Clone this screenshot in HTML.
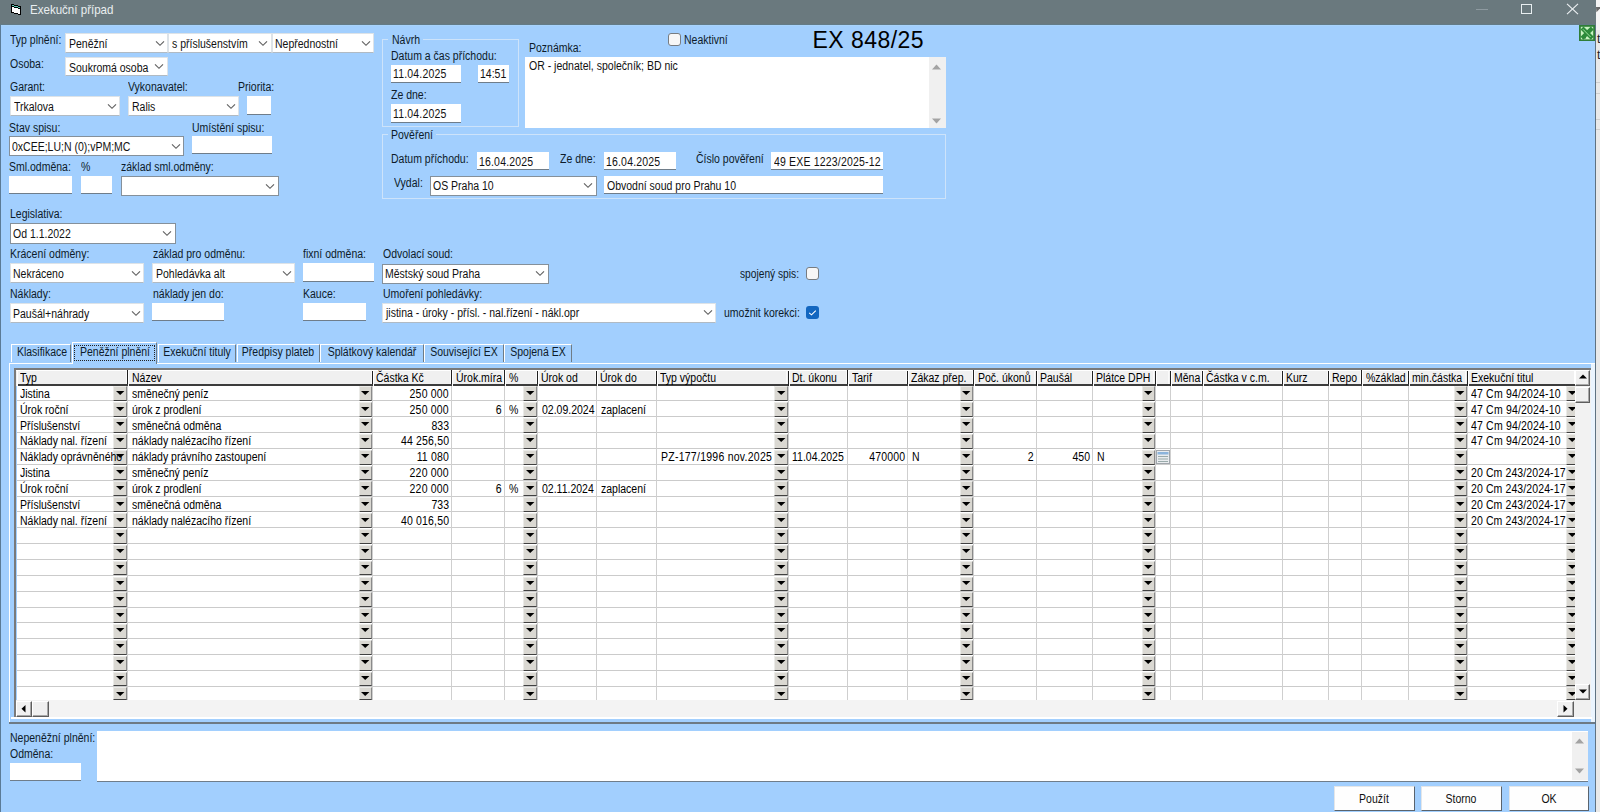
<!DOCTYPE html><html><head><meta charset="utf-8"><title>Exekuční případ</title><style>
html,body{margin:0;padding:0;width:1600px;height:812px;overflow:hidden;background:#a2cffe;}
.t{position:absolute;white-space:nowrap;font-family:"Liberation Sans",sans-serif;transform-origin:0 0;}
.b{position:absolute;}
</style></head><body>
<div class="b" style="left:0.00px;top:0.00px;width:1600.00px;height:812.00px;background:#a2cffe"></div>
<div class="b" style="left:1595.00px;top:0.00px;width:5.00px;height:812.00px;background:#e9e9e9"></div>
<div class="b" style="left:1596.00px;top:0.00px;width:4.00px;height:30.00px;background:#f4f4f4"></div>
<div class="b" style="left:1595.00px;top:25.00px;width:1.00px;height:787.00px;background:#5f7282"></div>
<svg class="b" style="left:1596px;top:0px" width="4" height="14"><polygon points="0,7 4,7 4,8.5 0.4,12.3" fill="#6a6a6a"/></svg>
<div class="t" style="left:1597.00px;top:32.34px;color:#222;font-size:12px;line-height:14.0px;transform:scaleX(1);">t</div>
<div class="t" style="left:1597.00px;top:48.34px;color:#222;font-size:12px;line-height:14.0px;transform:scaleX(1);">t</div>
<div class="b" style="left:1596.00px;top:82.00px;width:4.00px;height:1.00px;background:#cfcfcf"></div>
<div class="b" style="left:1596.00px;top:93.00px;width:4.00px;height:1.00px;background:#cfcfcf"></div>
<div class="b" style="left:1596.00px;top:119.00px;width:4.00px;height:1.00px;background:#cfcfcf"></div>
<div class="b" style="left:1596.00px;top:129.00px;width:4.00px;height:1.00px;background:#cfcfcf"></div>
<div class="b" style="left:0.00px;top:0.00px;width:1595.70px;height:25.00px;background:#6a797e"></div>
<div class="b" style="left:0.00px;top:24.00px;width:1595.70px;height:1.00px;background:#637b87"></div>
<div class="b" style="left:1.00px;top:25.00px;width:1594.00px;height:1.00px;background:#a8d3fb"></div>
<div class="b" style="left:0.00px;top:25.00px;width:1.00px;height:787.00px;background:#5b7b96"></div>
<svg class="b" style="left:11px;top:4px" width="10" height="11" viewBox="0 0 10 11"><polygon points="0,0 3,0 3,1 7,1 7,2 10,2 10,11 7,11 7,10 3,10 3,9 0,9" fill="#000"/><polygon points="1,3 3,3 3,4 7,4 7,5 9,5 9,10 7,10 7,9 3,9 3,8 1,8" fill="#fff"/><rect x="1" y="1" width="2" height="1" fill="#5cc7b4"/><rect x="3" y="2" width="4" height="1" fill="#5cc7b4"/><rect x="7" y="3" width="2" height="1" fill="#5cc7b4"/></svg>
<div class="t" style="left:30.40px;top:3.11px;color:#e9eef0;font-size:12.6px;line-height:14.700000000000001px;transform:scaleX(0.917);">Exekuční případ</div>
<div class="b" style="left:1476.00px;top:9.00px;width:12.00px;height:1.00px;background:#8e9aa0"></div>
<div class="b" style="left:1521.00px;top:4.00px;width:11.00px;height:10.00px;border:1.2px solid #e8eef0;box-sizing:border-box"></div>
<svg class="b" style="left:1565.5px;top:3px" width="13" height="12" viewBox="0 0 13 12"><line x1="1" y1="0.8" x2="12" y2="11.2" stroke="#eef2f4" stroke-width="1.1"/><line x1="12" y1="0.8" x2="1" y2="11.2" stroke="#eef2f4" stroke-width="1.1"/></svg>
<svg class="b" style="left:1579.3px;top:24.5px" width="16" height="16" viewBox="0 0 16 16"><rect x="0" y="0" width="16" height="16" fill="#2f7d38"/><rect x="1.8" y="1.8" width="12.4" height="12.6" fill="#c8f2c2"/><g stroke="#2c8a3a" stroke-width="4.2" stroke-linecap="square"><line x1="4.5" y1="4.5" x2="11.8" y2="11.8"/><line x1="11.8" y1="4.5" x2="4.5" y2="11.8"/></g><rect x="3" y="11" width="4" height="2.5" fill="#2c8a3a"/><line x1="4" y1="4.3" x2="11.6" y2="12" stroke="#a8eaa6" stroke-width="0.9"/></svg>
<div class="t" style="left:10.00px;top:33.14px;color:#0d1b2a;font-size:12px;line-height:14.0px;transform:scaleX(0.875);">Typ plnění:</div>
<div class="b" style="left:65.00px;top:33.00px;width:103.40px;height:20.00px;background:#fff;border:1px solid #dde3e8;border-bottom:1.3px solid #b0bac3;box-sizing:border-box"></div>
<svg class="b" style="left:155.20px;top:39.80px" width="10" height="7" viewBox="0 0 10 7"><polyline points="1,1.3 5,5.3 9,1.3" fill="none" stroke="#606060" stroke-width="1.15"/></svg>
<div class="t" style="left:69.00px;top:36.74px;color:#111;font-size:12px;line-height:14.0px;transform:scaleX(0.875);">Peněžní</div>
<div class="b" style="left:168.40px;top:33.00px;width:103.20px;height:20.00px;background:#fff;border:1px solid #dde3e8;border-bottom:1.3px solid #b0bac3;box-sizing:border-box"></div>
<svg class="b" style="left:258.40px;top:39.80px" width="10" height="7" viewBox="0 0 10 7"><polyline points="1,1.3 5,5.3 9,1.3" fill="none" stroke="#606060" stroke-width="1.15"/></svg>
<div class="t" style="left:172.20px;top:36.74px;color:#111;font-size:12px;line-height:14.0px;transform:scaleX(0.875);">s příslušenstvím</div>
<div class="b" style="left:271.60px;top:33.00px;width:102.80px;height:20.00px;background:#fff;border:1px solid #dde3e8;border-bottom:1.3px solid #b0bac3;box-sizing:border-box"></div>
<svg class="b" style="left:361.20px;top:39.80px" width="10" height="7" viewBox="0 0 10 7"><polyline points="1,1.3 5,5.3 9,1.3" fill="none" stroke="#606060" stroke-width="1.15"/></svg>
<div class="t" style="left:275.00px;top:36.74px;color:#111;font-size:12px;line-height:14.0px;transform:scaleX(0.875);">Nepřednostní</div>
<div class="t" style="left:10.00px;top:56.84px;color:#0d1b2a;font-size:12px;line-height:14.0px;transform:scaleX(0.875);">Osoba:</div>
<div class="b" style="left:65.00px;top:57.00px;width:102.50px;height:19.00px;background:#fff;border:1px solid #dde3e8;border-bottom:1.3px solid #b0bac3;box-sizing:border-box"></div>
<svg class="b" style="left:154.30px;top:63.30px" width="10" height="7" viewBox="0 0 10 7"><polyline points="1,1.3 5,5.3 9,1.3" fill="none" stroke="#606060" stroke-width="1.15"/></svg>
<div class="t" style="left:69.00px;top:60.74px;color:#111;font-size:12px;line-height:14.0px;transform:scaleX(0.875);">Soukromá osoba</div>
<div class="t" style="left:10.00px;top:79.94px;color:#0d1b2a;font-size:12px;line-height:14.0px;transform:scaleX(0.875);">Garant:</div>
<div class="t" style="left:128.00px;top:79.94px;color:#0d1b2a;font-size:12px;line-height:14.0px;transform:scaleX(0.875);">Vykonavatel:</div>
<div class="t" style="left:237.70px;top:80.34px;color:#0d1b2a;font-size:12px;line-height:14.0px;transform:scaleX(0.875);">Priorita:</div>
<div class="b" style="left:10.00px;top:96.30px;width:110.00px;height:19.70px;background:#fff;border:1px solid #dde3e8;border-bottom:1.3px solid #b0bac3;box-sizing:border-box"></div>
<svg class="b" style="left:106.80px;top:102.95px" width="10" height="7" viewBox="0 0 10 7"><polyline points="1,1.3 5,5.3 9,1.3" fill="none" stroke="#606060" stroke-width="1.15"/></svg>
<div class="t" style="left:14.00px;top:100.04px;color:#111;font-size:12px;line-height:14.0px;transform:scaleX(0.875);">Trkalova</div>
<div class="b" style="left:128.00px;top:96.30px;width:111.00px;height:19.70px;background:#fff;border:1px solid #dde3e8;border-bottom:1.3px solid #b0bac3;box-sizing:border-box"></div>
<svg class="b" style="left:225.80px;top:102.95px" width="10" height="7" viewBox="0 0 10 7"><polyline points="1,1.3 5,5.3 9,1.3" fill="none" stroke="#606060" stroke-width="1.15"/></svg>
<div class="t" style="left:132.00px;top:100.04px;color:#111;font-size:12px;line-height:14.0px;transform:scaleX(0.875);">Ralis</div>
<div class="b" style="left:247.30px;top:96.30px;width:24.20px;height:18.50px;background:#fff;border-bottom:1.2px solid #6f7d8a;box-sizing:border-box"></div>
<div class="t" style="left:9.30px;top:120.64px;color:#0d1b2a;font-size:12px;line-height:14.0px;transform:scaleX(0.875);">Stav spisu:</div>
<div class="t" style="left:192.00px;top:120.64px;color:#0d1b2a;font-size:12px;line-height:14.0px;transform:scaleX(0.875);">Umístění spisu:</div>
<div class="b" style="left:9.40px;top:136.30px;width:175.00px;height:20.00px;background:#fff;border:1px solid #85909a;box-sizing:border-box"></div>
<svg class="b" style="left:170.60px;top:143.10px" width="10" height="7" viewBox="0 0 10 7"><polyline points="1,1.3 5,5.3 9,1.3" fill="none" stroke="#606060" stroke-width="1.15"/></svg>
<div class="t" style="left:12.40px;top:140.04px;color:#111;font-size:12px;line-height:14.0px;transform:scaleX(0.875);">0xCEE;LU;N (0);vPM;MC</div>
<div class="b" style="left:191.80px;top:135.80px;width:80.20px;height:18.60px;background:#fff;border-bottom:1.2px solid #6f7d8a;box-sizing:border-box"></div>
<div class="t" style="left:9.30px;top:159.64px;color:#0d1b2a;font-size:12px;line-height:14.0px;transform:scaleX(0.875);">Sml.odměna:</div>
<div class="t" style="left:80.70px;top:159.64px;color:#0d1b2a;font-size:12px;line-height:14.0px;transform:scaleX(0.875);">%</div>
<div class="t" style="left:120.50px;top:159.64px;color:#0d1b2a;font-size:12px;line-height:14.0px;transform:scaleX(0.875);">základ sml.odměny:</div>
<div class="b" style="left:9.40px;top:175.70px;width:63.10px;height:18.30px;background:#fff;border-bottom:1.2px solid #6f7d8a;box-sizing:border-box"></div>
<div class="b" style="left:80.70px;top:175.70px;width:31.70px;height:18.30px;background:#fff;border-bottom:1.2px solid #6f7d8a;box-sizing:border-box"></div>
<div class="b" style="left:120.50px;top:175.70px;width:158.50px;height:20.00px;background:#fff;border:1px solid #85909a;box-sizing:border-box"></div>
<svg class="b" style="left:265.20px;top:182.50px" width="10" height="7" viewBox="0 0 10 7"><polyline points="1,1.3 5,5.3 9,1.3" fill="none" stroke="#606060" stroke-width="1.15"/></svg>
<div class="b" style="left:382.40px;top:39.40px;width:136.20px;height:87.80px;border:1px solid #cde3fa;box-sizing:border-box"></div>
<div class="b" style="left:388.00px;top:36.40px;width:34.51px;height:7.00px;background:#a2cffe"></div>
<div class="t" style="left:391.50px;top:32.94px;color:#0d1b2a;font-size:12px;line-height:14.0px;transform:scaleX(0.875);">Návrh</div>
<div class="t" style="left:391.00px;top:48.84px;color:#0d1b2a;font-size:12px;line-height:14.0px;transform:scaleX(0.875);">Datum a čas příchodu:</div>
<div class="b" style="left:390.60px;top:64.60px;width:70.80px;height:18.20px;background:#fff;border-bottom:1.2px solid #6f7d8a;box-sizing:border-box"></div>
<div class="t" style="left:392.60px;top:67.14px;color:#111;font-size:12px;line-height:14.0px;transform:scaleX(0.875);letter-spacing:0.2px;">11.04.2025</div>
<div class="b" style="left:477.60px;top:64.60px;width:31.90px;height:18.20px;background:#fff;border-bottom:1.2px solid #6f7d8a;box-sizing:border-box"></div>
<div class="t" style="left:479.60px;top:67.14px;color:#111;font-size:12px;line-height:14.0px;transform:scaleX(0.875);">14:51</div>
<div class="t" style="left:390.60px;top:88.14px;color:#0d1b2a;font-size:12px;line-height:14.0px;transform:scaleX(0.875);">Ze dne:</div>
<div class="b" style="left:390.60px;top:104.30px;width:70.80px;height:18.30px;background:#fff;border-bottom:1.2px solid #6f7d8a;box-sizing:border-box"></div>
<div class="t" style="left:392.60px;top:106.84px;color:#111;font-size:12px;line-height:14.0px;transform:scaleX(0.875);letter-spacing:0.2px;">11.04.2025</div>
<div class="t" style="left:529.20px;top:40.64px;color:#0d1b2a;font-size:12px;line-height:14.0px;transform:scaleX(0.875);">Poznámka:</div>
<div class="b" style="left:668.00px;top:33.00px;width:13.00px;height:13.00px;background:#f7f7f7;border:1.5px solid #777c81;border-radius:3px;box-sizing:border-box"></div>
<div class="t" style="left:683.70px;top:33.14px;color:#0d1b2a;font-size:12px;line-height:14.0px;transform:scaleX(0.875);">Neaktivní</div>
<div class="t" style="left:812.5px;top:26.80px;font-size:23px;line-height:26px;color:#000;letter-spacing:0.45px">EX 848/25</div>
<div class="b" style="left:525.20px;top:56.50px;width:420.40px;height:71.50px;background:#fff"></div>
<div class="b" style="left:928.80px;top:57.00px;width:16.80px;height:71.00px;background:#f0f0f0"></div>
<svg class="b" style="left:931px;top:63px" width="11" height="8"><polygon points="1,6.5 5.5,1.5 10,6.5" fill="#a3a3a3"/></svg>
<svg class="b" style="left:931px;top:117px" width="11" height="8"><polygon points="1,1.5 5.5,6.5 10,1.5" fill="#a3a3a3"/></svg>
<div class="t" style="left:528.50px;top:59.34px;color:#111;font-size:12px;line-height:14.0px;transform:scaleX(0.875);">OR - jednatel, společník; BD nic</div>
<div class="b" style="left:382.40px;top:134.40px;width:563.20px;height:64.40px;border:1px solid #cde3fa;box-sizing:border-box"></div>
<div class="b" style="left:387.90px;top:131.40px;width:48.53px;height:7.00px;background:#a2cffe"></div>
<div class="t" style="left:391.40px;top:128.14px;color:#0d1b2a;font-size:12px;line-height:14.0px;transform:scaleX(0.875);">Pověření</div>
<div class="t" style="left:391.40px;top:152.34px;color:#0d1b2a;font-size:12px;line-height:14.0px;transform:scaleX(0.875);">Datum příchodu:</div>
<div class="b" style="left:477.30px;top:152.00px;width:71.90px;height:18.30px;background:#fff;border-bottom:1.2px solid #6f7d8a;box-sizing:border-box"></div>
<div class="t" style="left:479.30px;top:154.54px;color:#111;font-size:12px;line-height:14.0px;transform:scaleX(0.875);letter-spacing:0.2px;">16.04.2025</div>
<div class="t" style="left:560.00px;top:152.34px;color:#0d1b2a;font-size:12px;line-height:14.0px;transform:scaleX(0.875);">Ze dne:</div>
<div class="b" style="left:604.00px;top:152.00px;width:72.00px;height:18.30px;background:#fff;border-bottom:1.2px solid #6f7d8a;box-sizing:border-box"></div>
<div class="t" style="left:606.00px;top:154.54px;color:#111;font-size:12px;line-height:14.0px;transform:scaleX(0.875);letter-spacing:0.2px;">16.04.2025</div>
<div class="t" style="left:695.60px;top:152.14px;color:#0d1b2a;font-size:12px;line-height:14.0px;transform:scaleX(0.875);">Číslo pověření</div>
<div class="b" style="left:771.00px;top:152.00px;width:111.60px;height:18.30px;background:#fff;border-bottom:1.2px solid #6f7d8a;box-sizing:border-box"></div>
<div class="t" style="left:774.20px;top:154.54px;color:#111;font-size:12px;line-height:14.0px;transform:scaleX(0.875);letter-spacing:0.2px;">49 EXE 1223/2025-12</div>
<div class="t" style="left:393.80px;top:175.74px;color:#0d1b2a;font-size:12px;line-height:14.0px;transform:scaleX(0.875);">Vydal:</div>
<div class="b" style="left:430.00px;top:175.50px;width:166.60px;height:20.00px;background:#fff;border:1px solid #85909a;box-sizing:border-box"></div>
<svg class="b" style="left:582.80px;top:182.30px" width="10" height="7" viewBox="0 0 10 7"><polyline points="1,1.3 5,5.3 9,1.3" fill="none" stroke="#606060" stroke-width="1.15"/></svg>
<div class="t" style="left:433.00px;top:179.24px;color:#111;font-size:12px;line-height:14.0px;transform:scaleX(0.875);">OS Praha 10</div>
<div class="b" style="left:604.00px;top:176.00px;width:278.60px;height:18.00px;background:#fff;border-bottom:1.2px solid #6f7d8a;box-sizing:border-box"></div>
<div class="t" style="left:607.00px;top:178.54px;color:#111;font-size:12px;line-height:14.0px;transform:scaleX(0.875);">Obvodní soud pro Prahu 10</div>
<div class="t" style="left:9.60px;top:207.34px;color:#0d1b2a;font-size:12px;line-height:14.0px;transform:scaleX(0.875);">Legislativa:</div>
<div class="b" style="left:9.60px;top:223.20px;width:166.20px;height:20.40px;background:#fff;border:1px solid #85909a;box-sizing:border-box"></div>
<svg class="b" style="left:162.00px;top:230.20px" width="10" height="7" viewBox="0 0 10 7"><polyline points="1,1.3 5,5.3 9,1.3" fill="none" stroke="#606060" stroke-width="1.15"/></svg>
<div class="t" style="left:12.60px;top:226.94px;color:#111;font-size:12px;line-height:14.0px;transform:scaleX(0.875);">Od 1.1.2022</div>
<div class="t" style="left:9.60px;top:247.34px;color:#0d1b2a;font-size:12px;line-height:14.0px;transform:scaleX(0.875);">Krácení odměny:</div>
<div class="t" style="left:152.50px;top:247.34px;color:#0d1b2a;font-size:12px;line-height:14.0px;transform:scaleX(0.875);">základ pro odměnu:</div>
<div class="t" style="left:303.00px;top:247.34px;color:#0d1b2a;font-size:12px;line-height:14.0px;transform:scaleX(0.875);">fixní odměna:</div>
<div class="t" style="left:383.00px;top:247.34px;color:#0d1b2a;font-size:12px;line-height:14.0px;transform:scaleX(0.875);">Odvolací soud:</div>
<div class="b" style="left:9.60px;top:263.30px;width:134.40px;height:20.00px;background:#fff;border:1px solid #dde3e8;border-bottom:1.3px solid #b0bac3;box-sizing:border-box"></div>
<svg class="b" style="left:130.80px;top:270.10px" width="10" height="7" viewBox="0 0 10 7"><polyline points="1,1.3 5,5.3 9,1.3" fill="none" stroke="#606060" stroke-width="1.15"/></svg>
<div class="t" style="left:13.10px;top:267.04px;color:#111;font-size:12px;line-height:14.0px;transform:scaleX(0.875);">Nekráceno</div>
<div class="b" style="left:152.20px;top:263.30px;width:143.00px;height:20.00px;background:#fff;border:1px solid #dde3e8;border-bottom:1.3px solid #b0bac3;box-sizing:border-box"></div>
<svg class="b" style="left:282.00px;top:270.10px" width="10" height="7" viewBox="0 0 10 7"><polyline points="1,1.3 5,5.3 9,1.3" fill="none" stroke="#606060" stroke-width="1.15"/></svg>
<div class="t" style="left:155.70px;top:267.04px;color:#111;font-size:12px;line-height:14.0px;transform:scaleX(0.875);">Pohledávka alt</div>
<div class="b" style="left:303.00px;top:263.00px;width:71.00px;height:18.60px;background:#fff;border-bottom:1.2px solid #6f7d8a;box-sizing:border-box"></div>
<div class="b" style="left:382.30px;top:263.50px;width:166.90px;height:20.00px;background:#fff;border:1px solid #85909a;box-sizing:border-box"></div>
<svg class="b" style="left:535.40px;top:270.30px" width="10" height="7" viewBox="0 0 10 7"><polyline points="1,1.3 5,5.3 9,1.3" fill="none" stroke="#606060" stroke-width="1.15"/></svg>
<div class="t" style="left:385.30px;top:267.24px;color:#111;font-size:12px;line-height:14.0px;transform:scaleX(0.875);">Městský soud Praha</div>
<div class="t" style="left:739.80px;top:266.84px;color:#0d1b2a;font-size:12px;line-height:14.0px;transform:scaleX(0.85);">spojený spis:</div>
<div class="b" style="left:806.20px;top:267.00px;width:13.00px;height:13.00px;background:#f7f7f7;border:1.5px solid #777c81;border-radius:3px;box-sizing:border-box"></div>
<div class="t" style="left:9.60px;top:286.54px;color:#0d1b2a;font-size:12px;line-height:14.0px;transform:scaleX(0.875);">Náklady:</div>
<div class="t" style="left:152.50px;top:286.54px;color:#0d1b2a;font-size:12px;line-height:14.0px;transform:scaleX(0.875);">náklady jen do:</div>
<div class="t" style="left:303.00px;top:286.54px;color:#0d1b2a;font-size:12px;line-height:14.0px;transform:scaleX(0.875);">Kauce:</div>
<div class="t" style="left:382.50px;top:286.54px;color:#0d1b2a;font-size:12px;line-height:14.0px;transform:scaleX(0.875);">Umoření pohledávky:</div>
<div class="b" style="left:9.60px;top:303.20px;width:134.40px;height:19.40px;background:#fff;border:1px solid #dde3e8;border-bottom:1.3px solid #b0bac3;box-sizing:border-box"></div>
<svg class="b" style="left:130.80px;top:309.70px" width="10" height="7" viewBox="0 0 10 7"><polyline points="1,1.3 5,5.3 9,1.3" fill="none" stroke="#606060" stroke-width="1.15"/></svg>
<div class="t" style="left:13.10px;top:306.94px;color:#111;font-size:12px;line-height:14.0px;transform:scaleX(0.875);">Paušál+náhrady</div>
<div class="b" style="left:152.20px;top:302.60px;width:71.50px;height:18.00px;background:#fff;border-bottom:1.2px solid #6f7d8a;box-sizing:border-box"></div>
<div class="b" style="left:303.00px;top:302.60px;width:62.60px;height:18.00px;background:#fff;border-bottom:1.2px solid #6f7d8a;box-sizing:border-box"></div>
<div class="b" style="left:382.30px;top:302.50px;width:333.70px;height:20.30px;background:#fff;border:1px solid #dde3e8;border-bottom:1.3px solid #b0bac3;box-sizing:border-box"></div>
<svg class="b" style="left:702.80px;top:309.45px" width="10" height="7" viewBox="0 0 10 7"><polyline points="1,1.3 5,5.3 9,1.3" fill="none" stroke="#606060" stroke-width="1.15"/></svg>
<div class="t" style="left:385.80px;top:306.24px;color:#111;font-size:12px;line-height:14.0px;transform:scaleX(0.875);">jistina - úroky - přísl. - nal.řízení - nákl.opr</div>
<div class="t" style="left:724.00px;top:306.34px;color:#0d1b2a;font-size:12px;line-height:14.0px;transform:scaleX(0.875);">umožnit korekci:</div>
<div class="b" style="left:806.30px;top:306.00px;width:13.00px;height:13.00px;background:#1266c0;border-radius:3px"></div>
<svg class="b" style="left:806.3px;top:306px" width="13" height="13" viewBox="0 0 13 13"><polyline points="3.2,6.9 5.5,8.8 9.8,4.6" fill="none" stroke="#fff" stroke-width="1.1"/></svg>
<div class="b" style="left:9.00px;top:362.50px;width:1586.00px;height:359.20px;border-top:1px solid #fff;border-left:1.5px solid #fff;box-sizing:border-box"></div>
<div class="b" style="left:9.00px;top:721.70px;width:1586.00px;height:2.00px;background:#6d7a85"></div>
<div class="b" style="left:1591.00px;top:363.50px;width:4.00px;height:358.20px;background:#eaf4fe"></div>
<div class="b" style="left:11.20px;top:344.40px;width:60.30px;height:18.10px;background:#a2cffe;border-top:1px solid #fff;border-left:1px solid #fff;border-right:1.5px solid #6f7c86;box-sizing:border-box"></div>
<div class="t" style="left:-157.65px;width:400px;text-align:center;top:345.44px;color:#0d1b2a;font-size:12px;line-height:14.0px;transform:scaleX(0.875);transform-origin:50% 0;">Klasifikace</div>
<div class="b" style="left:72.20px;top:342.20px;width:85.30px;height:21.80px;background:#a2cffe;border-top:1px solid #fff;border-left:1px solid #fff;border-right:1.5px solid #6f7c86;box-sizing:border-box"></div>
<div class="b" style="left:74.20px;top:345.20px;width:80.80px;height:15.60px;border:1px dotted #222;box-sizing:border-box"></div>
<div class="t" style="left:-85.15px;width:400px;text-align:center;top:345.44px;color:#0d1b2a;font-size:12px;line-height:14.0px;transform:scaleX(0.875);transform-origin:50% 0;">Peněžní plnění</div>
<div class="b" style="left:157.50px;top:344.40px;width:78.00px;height:18.10px;background:#a2cffe;border-top:1px solid #fff;border-left:1px solid #fff;border-right:1.5px solid #6f7c86;box-sizing:border-box"></div>
<div class="t" style="left:-3.50px;width:400px;text-align:center;top:345.44px;color:#0d1b2a;font-size:12px;line-height:14.0px;transform:scaleX(0.875);transform-origin:50% 0;">Exekuční tituly</div>
<div class="b" style="left:236.50px;top:344.40px;width:83.50px;height:18.10px;background:#a2cffe;border-top:1px solid #fff;border-left:1px solid #fff;border-right:1.5px solid #6f7c86;box-sizing:border-box"></div>
<div class="t" style="left:78.25px;width:400px;text-align:center;top:345.44px;color:#0d1b2a;font-size:12px;line-height:14.0px;transform:scaleX(0.875);transform-origin:50% 0;">Předpisy plateb</div>
<div class="b" style="left:320.00px;top:344.40px;width:103.50px;height:18.10px;background:#a2cffe;border-top:1px solid #fff;border-left:1px solid #fff;border-right:1.5px solid #6f7c86;box-sizing:border-box"></div>
<div class="t" style="left:171.75px;width:400px;text-align:center;top:345.44px;color:#0d1b2a;font-size:12px;line-height:14.0px;transform:scaleX(0.875);transform-origin:50% 0;">Splátkový kalendář</div>
<div class="b" style="left:423.50px;top:344.40px;width:80.50px;height:18.10px;background:#a2cffe;border-top:1px solid #fff;border-left:1px solid #fff;border-right:1.5px solid #6f7c86;box-sizing:border-box"></div>
<div class="t" style="left:263.75px;width:400px;text-align:center;top:345.44px;color:#0d1b2a;font-size:12px;line-height:14.0px;transform:scaleX(0.875);transform-origin:50% 0;">Související EX</div>
<div class="b" style="left:504.00px;top:344.40px;width:67.60px;height:18.10px;background:#a2cffe;border-top:1px solid #fff;border-left:1px solid #fff;border-right:1.5px solid #6f7c86;box-sizing:border-box"></div>
<div class="t" style="left:337.80px;width:400px;text-align:center;top:345.44px;color:#0d1b2a;font-size:12px;line-height:14.0px;transform:scaleX(0.875);transform-origin:50% 0;">Spojená EX</div>
<div class="b" style="left:14.30px;top:368.20px;width:1576.70px;height:2.00px;background:#7a7a7a"></div>
<div class="b" style="left:14.30px;top:368.20px;width:2.00px;height:348.60px;background:#7a7a7a"></div>
<div class="b" style="left:10.50px;top:716.80px;width:1581.00px;height:2.60px;background:#fff"></div>
<div class="b" style="left:16.50px;top:370.10px;width:1558.00px;height:330.30px;background:#fff"></div>
<div class="b" style="left:16.30px;top:369.80px;width:1558.20px;height:16.30px;background:#f0f0f0"></div>
<div class="b" style="left:16.30px;top:369.80px;width:111.20px;height:1.00px;background:#fff"></div>
<div class="b" style="left:16.80px;top:369.80px;width:1.20px;height:16.10px;background:#fff"></div>
<div class="b" style="left:125.80px;top:370.40px;width:1.20px;height:13.70px;background:#fafafa"></div>
<div class="b" style="left:127.00px;top:369.80px;width:1.00px;height:16.10px;background:#202020"></div>
<div class="b" style="left:18.00px;top:384.20px;width:110.00px;height:1.70px;background:#3c3c3c"></div>
<div class="t" style="left:20.00px;top:371.34px;color:#000;font-size:12px;line-height:14.0px;transform:scaleX(0.875);">Typ</div>
<div class="b" style="left:127.50px;top:369.80px;width:244.90px;height:1.00px;background:#fff"></div>
<div class="b" style="left:128.00px;top:369.80px;width:1.20px;height:16.10px;background:#fff"></div>
<div class="b" style="left:370.70px;top:370.40px;width:1.20px;height:13.70px;background:#fafafa"></div>
<div class="b" style="left:371.90px;top:369.80px;width:1.00px;height:16.10px;background:#202020"></div>
<div class="b" style="left:129.20px;top:384.20px;width:243.70px;height:1.70px;background:#3c3c3c"></div>
<div class="t" style="left:131.50px;top:371.34px;color:#000;font-size:12px;line-height:14.0px;transform:scaleX(0.875);">Název</div>
<div class="b" style="left:372.40px;top:369.80px;width:79.20px;height:1.00px;background:#fff"></div>
<div class="b" style="left:372.90px;top:369.80px;width:1.20px;height:16.10px;background:#fff"></div>
<div class="b" style="left:449.90px;top:370.40px;width:1.20px;height:13.70px;background:#fafafa"></div>
<div class="b" style="left:451.10px;top:369.80px;width:1.00px;height:16.10px;background:#202020"></div>
<div class="b" style="left:374.10px;top:384.20px;width:78.00px;height:1.70px;background:#3c3c3c"></div>
<div class="t" style="left:376.40px;top:371.34px;color:#000;font-size:12px;line-height:14.0px;transform:scaleX(0.875);">Částka Kč</div>
<div class="b" style="left:451.60px;top:369.80px;width:52.90px;height:1.00px;background:#fff"></div>
<div class="b" style="left:452.10px;top:369.80px;width:1.20px;height:16.10px;background:#fff"></div>
<div class="b" style="left:502.80px;top:370.40px;width:1.20px;height:13.70px;background:#fafafa"></div>
<div class="b" style="left:504.00px;top:369.80px;width:1.00px;height:16.10px;background:#202020"></div>
<div class="b" style="left:453.30px;top:384.20px;width:51.70px;height:1.70px;background:#3c3c3c"></div>
<div class="t" style="left:455.60px;top:371.34px;color:#000;font-size:12px;line-height:14.0px;transform:scaleX(0.875);">Úrok.míra</div>
<div class="b" style="left:504.50px;top:369.80px;width:32.70px;height:1.00px;background:#fff"></div>
<div class="b" style="left:505.00px;top:369.80px;width:1.20px;height:16.10px;background:#fff"></div>
<div class="b" style="left:535.50px;top:370.40px;width:1.20px;height:13.70px;background:#fafafa"></div>
<div class="b" style="left:536.70px;top:369.80px;width:1.00px;height:16.10px;background:#202020"></div>
<div class="b" style="left:506.20px;top:384.20px;width:31.50px;height:1.70px;background:#3c3c3c"></div>
<div class="t" style="left:508.50px;top:371.34px;color:#000;font-size:12px;line-height:14.0px;transform:scaleX(0.875);">%</div>
<div class="b" style="left:537.20px;top:369.80px;width:59.00px;height:1.00px;background:#fff"></div>
<div class="b" style="left:537.70px;top:369.80px;width:1.20px;height:16.10px;background:#fff"></div>
<div class="b" style="left:594.50px;top:370.40px;width:1.20px;height:13.70px;background:#fafafa"></div>
<div class="b" style="left:595.70px;top:369.80px;width:1.00px;height:16.10px;background:#202020"></div>
<div class="b" style="left:538.90px;top:384.20px;width:57.80px;height:1.70px;background:#3c3c3c"></div>
<div class="t" style="left:541.20px;top:371.34px;color:#000;font-size:12px;line-height:14.0px;transform:scaleX(0.875);">Úrok od</div>
<div class="b" style="left:596.20px;top:369.80px;width:60.20px;height:1.00px;background:#fff"></div>
<div class="b" style="left:596.70px;top:369.80px;width:1.20px;height:16.10px;background:#fff"></div>
<div class="b" style="left:654.70px;top:370.40px;width:1.20px;height:13.70px;background:#fafafa"></div>
<div class="b" style="left:655.90px;top:369.80px;width:1.00px;height:16.10px;background:#202020"></div>
<div class="b" style="left:597.90px;top:384.20px;width:59.00px;height:1.70px;background:#3c3c3c"></div>
<div class="t" style="left:600.20px;top:371.34px;color:#000;font-size:12px;line-height:14.0px;transform:scaleX(0.875);">Úrok do</div>
<div class="b" style="left:656.40px;top:369.80px;width:131.60px;height:1.00px;background:#fff"></div>
<div class="b" style="left:656.90px;top:369.80px;width:1.20px;height:16.10px;background:#fff"></div>
<div class="b" style="left:786.30px;top:370.40px;width:1.20px;height:13.70px;background:#fafafa"></div>
<div class="b" style="left:787.50px;top:369.80px;width:1.00px;height:16.10px;background:#202020"></div>
<div class="b" style="left:658.10px;top:384.20px;width:130.40px;height:1.70px;background:#3c3c3c"></div>
<div class="t" style="left:660.40px;top:371.34px;color:#000;font-size:12px;line-height:14.0px;transform:scaleX(0.875);">Typ výpočtu</div>
<div class="b" style="left:788.00px;top:369.80px;width:59.60px;height:1.00px;background:#fff"></div>
<div class="b" style="left:788.50px;top:369.80px;width:1.20px;height:16.10px;background:#fff"></div>
<div class="b" style="left:845.90px;top:370.40px;width:1.20px;height:13.70px;background:#fafafa"></div>
<div class="b" style="left:847.10px;top:369.80px;width:1.00px;height:16.10px;background:#202020"></div>
<div class="b" style="left:789.70px;top:384.20px;width:58.40px;height:1.70px;background:#3c3c3c"></div>
<div class="t" style="left:792.00px;top:371.34px;color:#000;font-size:12px;line-height:14.0px;transform:scaleX(0.875);">Dt. úkonu</div>
<div class="b" style="left:847.60px;top:369.80px;width:59.80px;height:1.00px;background:#fff"></div>
<div class="b" style="left:848.10px;top:369.80px;width:1.20px;height:16.10px;background:#fff"></div>
<div class="b" style="left:905.70px;top:370.40px;width:1.20px;height:13.70px;background:#fafafa"></div>
<div class="b" style="left:906.90px;top:369.80px;width:1.00px;height:16.10px;background:#202020"></div>
<div class="b" style="left:849.30px;top:384.20px;width:58.60px;height:1.70px;background:#3c3c3c"></div>
<div class="t" style="left:851.60px;top:371.34px;color:#000;font-size:12px;line-height:14.0px;transform:scaleX(0.875);">Tarif</div>
<div class="b" style="left:907.40px;top:369.80px;width:66.20px;height:1.00px;background:#fff"></div>
<div class="b" style="left:907.90px;top:369.80px;width:1.20px;height:16.10px;background:#fff"></div>
<div class="b" style="left:971.90px;top:370.40px;width:1.20px;height:13.70px;background:#fafafa"></div>
<div class="b" style="left:973.10px;top:369.80px;width:1.00px;height:16.10px;background:#202020"></div>
<div class="b" style="left:909.10px;top:384.20px;width:65.00px;height:1.70px;background:#3c3c3c"></div>
<div class="t" style="left:911.40px;top:371.34px;color:#000;font-size:12px;line-height:14.0px;transform:scaleX(0.875);">Zákaz přep.</div>
<div class="b" style="left:973.60px;top:369.80px;width:62.40px;height:1.00px;background:#fff"></div>
<div class="b" style="left:974.10px;top:369.80px;width:1.20px;height:16.10px;background:#fff"></div>
<div class="b" style="left:1034.30px;top:370.40px;width:1.20px;height:13.70px;background:#fafafa"></div>
<div class="b" style="left:1035.50px;top:369.80px;width:1.00px;height:16.10px;background:#202020"></div>
<div class="b" style="left:975.30px;top:384.20px;width:61.20px;height:1.70px;background:#3c3c3c"></div>
<div class="t" style="left:977.60px;top:371.34px;color:#000;font-size:12px;line-height:14.0px;transform:scaleX(0.875);">Poč. úkonů</div>
<div class="b" style="left:1036.00px;top:369.80px;width:56.30px;height:1.00px;background:#fff"></div>
<div class="b" style="left:1036.50px;top:369.80px;width:1.20px;height:16.10px;background:#fff"></div>
<div class="b" style="left:1090.60px;top:370.40px;width:1.20px;height:13.70px;background:#fafafa"></div>
<div class="b" style="left:1091.80px;top:369.80px;width:1.00px;height:16.10px;background:#202020"></div>
<div class="b" style="left:1037.70px;top:384.20px;width:55.10px;height:1.70px;background:#3c3c3c"></div>
<div class="t" style="left:1040.00px;top:371.34px;color:#000;font-size:12px;line-height:14.0px;transform:scaleX(0.875);">Paušál</div>
<div class="b" style="left:1092.30px;top:369.80px;width:62.70px;height:1.00px;background:#fff"></div>
<div class="b" style="left:1092.80px;top:369.80px;width:1.20px;height:16.10px;background:#fff"></div>
<div class="b" style="left:1153.30px;top:370.40px;width:1.20px;height:13.70px;background:#fafafa"></div>
<div class="b" style="left:1154.50px;top:369.80px;width:1.00px;height:16.10px;background:#202020"></div>
<div class="b" style="left:1094.00px;top:384.20px;width:61.50px;height:1.70px;background:#3c3c3c"></div>
<div class="t" style="left:1096.30px;top:371.34px;color:#000;font-size:12px;line-height:14.0px;transform:scaleX(0.875);">Plátce DPH</div>
<div class="b" style="left:1155.00px;top:369.80px;width:15.00px;height:1.00px;background:#fff"></div>
<div class="b" style="left:1155.50px;top:369.80px;width:1.20px;height:16.10px;background:#fff"></div>
<div class="b" style="left:1168.30px;top:370.40px;width:1.20px;height:13.70px;background:#fafafa"></div>
<div class="b" style="left:1169.50px;top:369.80px;width:1.00px;height:16.10px;background:#202020"></div>
<div class="b" style="left:1156.70px;top:384.20px;width:13.80px;height:1.70px;background:#3c3c3c"></div>
<div class="b" style="left:1170.00px;top:369.80px;width:32.40px;height:1.00px;background:#fff"></div>
<div class="b" style="left:1170.50px;top:369.80px;width:1.20px;height:16.10px;background:#fff"></div>
<div class="b" style="left:1200.70px;top:370.40px;width:1.20px;height:13.70px;background:#fafafa"></div>
<div class="b" style="left:1201.90px;top:369.80px;width:1.00px;height:16.10px;background:#202020"></div>
<div class="b" style="left:1171.70px;top:384.20px;width:31.20px;height:1.70px;background:#3c3c3c"></div>
<div class="t" style="left:1174.00px;top:371.34px;color:#000;font-size:12px;line-height:14.0px;transform:scaleX(0.875);">Měna</div>
<div class="b" style="left:1202.40px;top:369.80px;width:79.90px;height:1.00px;background:#fff"></div>
<div class="b" style="left:1202.90px;top:369.80px;width:1.20px;height:16.10px;background:#fff"></div>
<div class="b" style="left:1280.60px;top:370.40px;width:1.20px;height:13.70px;background:#fafafa"></div>
<div class="b" style="left:1281.80px;top:369.80px;width:1.00px;height:16.10px;background:#202020"></div>
<div class="b" style="left:1204.10px;top:384.20px;width:78.70px;height:1.70px;background:#3c3c3c"></div>
<div class="t" style="left:1206.40px;top:371.34px;color:#000;font-size:12px;line-height:14.0px;transform:scaleX(0.875);">Částka v c.m.</div>
<div class="b" style="left:1282.30px;top:369.80px;width:46.10px;height:1.00px;background:#fff"></div>
<div class="b" style="left:1282.80px;top:369.80px;width:1.20px;height:16.10px;background:#fff"></div>
<div class="b" style="left:1326.70px;top:370.40px;width:1.20px;height:13.70px;background:#fafafa"></div>
<div class="b" style="left:1327.90px;top:369.80px;width:1.00px;height:16.10px;background:#202020"></div>
<div class="b" style="left:1284.00px;top:384.20px;width:44.90px;height:1.70px;background:#3c3c3c"></div>
<div class="t" style="left:1286.30px;top:371.34px;color:#000;font-size:12px;line-height:14.0px;transform:scaleX(0.875);">Kurz</div>
<div class="b" style="left:1328.40px;top:369.80px;width:33.20px;height:1.00px;background:#fff"></div>
<div class="b" style="left:1328.90px;top:369.80px;width:1.20px;height:16.10px;background:#fff"></div>
<div class="b" style="left:1359.90px;top:370.40px;width:1.20px;height:13.70px;background:#fafafa"></div>
<div class="b" style="left:1361.10px;top:369.80px;width:1.00px;height:16.10px;background:#202020"></div>
<div class="b" style="left:1330.10px;top:384.20px;width:32.00px;height:1.70px;background:#3c3c3c"></div>
<div class="t" style="left:1332.40px;top:371.34px;color:#000;font-size:12px;line-height:14.0px;transform:scaleX(0.875);">Repo</div>
<div class="b" style="left:1361.60px;top:369.80px;width:46.80px;height:1.00px;background:#fff"></div>
<div class="b" style="left:1362.10px;top:369.80px;width:1.20px;height:16.10px;background:#fff"></div>
<div class="b" style="left:1406.70px;top:370.40px;width:1.20px;height:13.70px;background:#fafafa"></div>
<div class="b" style="left:1407.90px;top:369.80px;width:1.00px;height:16.10px;background:#202020"></div>
<div class="b" style="left:1363.30px;top:384.20px;width:45.60px;height:1.70px;background:#3c3c3c"></div>
<div class="t" style="left:1365.60px;top:371.34px;color:#000;font-size:12px;line-height:14.0px;transform:scaleX(0.875);">%základ</div>
<div class="b" style="left:1408.40px;top:369.80px;width:58.60px;height:1.00px;background:#fff"></div>
<div class="b" style="left:1408.90px;top:369.80px;width:1.20px;height:16.10px;background:#fff"></div>
<div class="b" style="left:1465.30px;top:370.40px;width:1.20px;height:13.70px;background:#fafafa"></div>
<div class="b" style="left:1466.50px;top:369.80px;width:1.00px;height:16.10px;background:#202020"></div>
<div class="b" style="left:1410.10px;top:384.20px;width:57.40px;height:1.70px;background:#3c3c3c"></div>
<div class="t" style="left:1412.40px;top:371.34px;color:#000;font-size:12px;line-height:14.0px;transform:scaleX(0.875);">min.částka</div>
<div class="b" style="left:1467.00px;top:369.80px;width:108.00px;height:1.00px;background:#fff"></div>
<div class="b" style="left:1467.50px;top:369.80px;width:1.20px;height:16.10px;background:#fff"></div>
<div class="b" style="left:1468.70px;top:384.20px;width:106.80px;height:1.70px;background:#3c3c3c"></div>
<div class="t" style="left:1471.00px;top:371.34px;color:#000;font-size:12px;line-height:14.0px;transform:scaleX(0.875);">Exekuční titul</div>
<div class="b" style="left:16.50px;top:400.45px;width:1558.00px;height:1.00px;background:#cbcbcb"></div>
<div class="b" style="left:16.50px;top:416.30px;width:1558.00px;height:1.00px;background:#cbcbcb"></div>
<div class="b" style="left:16.50px;top:432.15px;width:1558.00px;height:1.00px;background:#cbcbcb"></div>
<div class="b" style="left:16.50px;top:448.00px;width:1558.00px;height:1.00px;background:#cbcbcb"></div>
<div class="b" style="left:16.50px;top:463.85px;width:1558.00px;height:1.00px;background:#cbcbcb"></div>
<div class="b" style="left:16.50px;top:479.70px;width:1558.00px;height:1.00px;background:#cbcbcb"></div>
<div class="b" style="left:16.50px;top:495.55px;width:1558.00px;height:1.00px;background:#cbcbcb"></div>
<div class="b" style="left:16.50px;top:511.40px;width:1558.00px;height:1.00px;background:#cbcbcb"></div>
<div class="b" style="left:16.50px;top:527.25px;width:1558.00px;height:1.00px;background:#cbcbcb"></div>
<div class="b" style="left:16.50px;top:543.10px;width:1558.00px;height:1.00px;background:#cbcbcb"></div>
<div class="b" style="left:16.50px;top:558.95px;width:1558.00px;height:1.00px;background:#cbcbcb"></div>
<div class="b" style="left:16.50px;top:574.80px;width:1558.00px;height:1.00px;background:#cbcbcb"></div>
<div class="b" style="left:16.50px;top:590.65px;width:1558.00px;height:1.00px;background:#cbcbcb"></div>
<div class="b" style="left:16.50px;top:606.50px;width:1558.00px;height:1.00px;background:#cbcbcb"></div>
<div class="b" style="left:16.50px;top:622.35px;width:1558.00px;height:1.00px;background:#cbcbcb"></div>
<div class="b" style="left:16.50px;top:638.20px;width:1558.00px;height:1.00px;background:#cbcbcb"></div>
<div class="b" style="left:16.50px;top:654.05px;width:1558.00px;height:1.00px;background:#cbcbcb"></div>
<div class="b" style="left:16.50px;top:669.90px;width:1558.00px;height:1.00px;background:#cbcbcb"></div>
<div class="b" style="left:16.50px;top:685.75px;width:1558.00px;height:1.00px;background:#cbcbcb"></div>
<div class="b" style="left:127.00px;top:386.10px;width:1.00px;height:314.30px;background:#cfcfcf"></div>
<div class="b" style="left:371.90px;top:386.10px;width:1.00px;height:314.30px;background:#cfcfcf"></div>
<div class="b" style="left:451.10px;top:386.10px;width:1.00px;height:314.30px;background:#cfcfcf"></div>
<div class="b" style="left:504.00px;top:386.10px;width:1.00px;height:314.30px;background:#cfcfcf"></div>
<div class="b" style="left:536.70px;top:386.10px;width:1.00px;height:314.30px;background:#cfcfcf"></div>
<div class="b" style="left:595.70px;top:386.10px;width:1.00px;height:314.30px;background:#cfcfcf"></div>
<div class="b" style="left:655.90px;top:386.10px;width:1.00px;height:314.30px;background:#cfcfcf"></div>
<div class="b" style="left:787.50px;top:386.10px;width:1.00px;height:314.30px;background:#cfcfcf"></div>
<div class="b" style="left:847.10px;top:386.10px;width:1.00px;height:314.30px;background:#cfcfcf"></div>
<div class="b" style="left:906.90px;top:386.10px;width:1.00px;height:314.30px;background:#cfcfcf"></div>
<div class="b" style="left:973.10px;top:386.10px;width:1.00px;height:314.30px;background:#cfcfcf"></div>
<div class="b" style="left:1035.50px;top:386.10px;width:1.00px;height:314.30px;background:#cfcfcf"></div>
<div class="b" style="left:1091.80px;top:386.10px;width:1.00px;height:314.30px;background:#cfcfcf"></div>
<div class="b" style="left:1154.50px;top:386.10px;width:1.00px;height:314.30px;background:#cfcfcf"></div>
<div class="b" style="left:1169.50px;top:386.10px;width:1.00px;height:314.30px;background:#cfcfcf"></div>
<div class="b" style="left:1201.90px;top:386.10px;width:1.00px;height:314.30px;background:#cfcfcf"></div>
<div class="b" style="left:1281.80px;top:386.10px;width:1.00px;height:314.30px;background:#cfcfcf"></div>
<div class="b" style="left:1327.90px;top:386.10px;width:1.00px;height:314.30px;background:#cfcfcf"></div>
<div class="b" style="left:1361.10px;top:386.10px;width:1.00px;height:314.30px;background:#cfcfcf"></div>
<div class="b" style="left:1407.90px;top:386.10px;width:1.00px;height:314.30px;background:#cfcfcf"></div>
<div class="b" style="left:1466.50px;top:386.10px;width:1.00px;height:314.30px;background:#cfcfcf"></div>
<div class="t" style="left:1471.30px;top:386.84px;color:#000;font-size:12px;line-height:14.0px;transform:scaleX(0.875);letter-spacing:0.2px">47 Cm 94/2024-10</div>
<div class="b" style="left:113.20px;top:386.30px;width:13.60px;height:14.85px;background:#dad8d2;border-left:1px solid #ebebe8;border-top:1px solid #ebebe8;border-bottom:1.6px solid #404040;border-right:1px solid #8a8a8a;box-sizing:border-box"></div>
<svg class="b" style="left:115.70px;top:390.70px" width="9" height="5" viewBox="0 0 9 5"><polygon points="0,0 8.4,0 4.2,4.1" fill="#000"/></svg>
<div class="b" style="left:358.80px;top:386.30px;width:13.20px;height:14.85px;background:#dad8d2;border-left:1px solid #ebebe8;border-top:1px solid #ebebe8;border-bottom:1.6px solid #404040;border-right:1px solid #8a8a8a;box-sizing:border-box"></div>
<svg class="b" style="left:361.10px;top:390.70px" width="9" height="5" viewBox="0 0 9 5"><polygon points="0,0 8.4,0 4.2,4.1" fill="#000"/></svg>
<div class="b" style="left:523.30px;top:386.30px;width:13.50px;height:14.85px;background:#dad8d2;border-left:1px solid #ebebe8;border-top:1px solid #ebebe8;border-bottom:1.6px solid #404040;border-right:1px solid #8a8a8a;box-sizing:border-box"></div>
<svg class="b" style="left:525.75px;top:390.70px" width="9" height="5" viewBox="0 0 9 5"><polygon points="0,0 8.4,0 4.2,4.1" fill="#000"/></svg>
<div class="b" style="left:774.00px;top:386.30px;width:13.60px;height:14.85px;background:#dad8d2;border-left:1px solid #ebebe8;border-top:1px solid #ebebe8;border-bottom:1.6px solid #404040;border-right:1px solid #8a8a8a;box-sizing:border-box"></div>
<svg class="b" style="left:776.50px;top:390.70px" width="9" height="5" viewBox="0 0 9 5"><polygon points="0,0 8.4,0 4.2,4.1" fill="#000"/></svg>
<div class="b" style="left:959.60px;top:386.30px;width:13.00px;height:14.85px;background:#dad8d2;border-left:1px solid #ebebe8;border-top:1px solid #ebebe8;border-bottom:1.6px solid #404040;border-right:1px solid #8a8a8a;box-sizing:border-box"></div>
<svg class="b" style="left:961.80px;top:390.70px" width="9" height="5" viewBox="0 0 9 5"><polygon points="0,0 8.4,0 4.2,4.1" fill="#000"/></svg>
<div class="b" style="left:1141.60px;top:386.30px;width:13.00px;height:14.85px;background:#dad8d2;border-left:1px solid #ebebe8;border-top:1px solid #ebebe8;border-bottom:1.6px solid #404040;border-right:1px solid #8a8a8a;box-sizing:border-box"></div>
<svg class="b" style="left:1143.80px;top:390.70px" width="9" height="5" viewBox="0 0 9 5"><polygon points="0,0 8.4,0 4.2,4.1" fill="#000"/></svg>
<div class="b" style="left:1453.50px;top:386.30px;width:13.10px;height:14.85px;background:#dad8d2;border-left:1px solid #ebebe8;border-top:1px solid #ebebe8;border-bottom:1.6px solid #404040;border-right:1px solid #8a8a8a;box-sizing:border-box"></div>
<svg class="b" style="left:1455.75px;top:390.70px" width="9" height="5" viewBox="0 0 9 5"><polygon points="0,0 8.4,0 4.2,4.1" fill="#000"/></svg>
<div class="b" style="left:1566.00px;top:386.30px;width:12.00px;height:14.85px;background:#dad8d2;border-left:1px solid #ebebe8;border-top:1px solid #ebebe8;border-bottom:1.6px solid #404040;border-right:1px solid #8a8a8a;box-sizing:border-box"></div>
<svg class="b" style="left:1567.70px;top:390.70px" width="9" height="5" viewBox="0 0 9 5"><polygon points="0,0 8.4,0 4.2,4.1" fill="#000"/></svg>
<div class="t" style="left:20.10px;top:386.84px;color:#000;font-size:12px;line-height:14.0px;transform:scaleX(0.875);letter-spacing:0px">Jistina</div>
<div class="t" style="left:131.80px;top:386.84px;color:#000;font-size:12px;line-height:14.0px;transform:scaleX(0.875);letter-spacing:0px">směnečný peníz</div>
<div class="t" style="right:1150.90px;top:386.84px;color:#000;font-size:12px;line-height:14.0px;transform:scaleX(0.875);transform-origin:100% 0;letter-spacing:0.2px;">250 000</div>
<div class="t" style="left:1471.30px;top:402.69px;color:#000;font-size:12px;line-height:14.0px;transform:scaleX(0.875);letter-spacing:0.2px">47 Cm 94/2024-10</div>
<div class="b" style="left:113.20px;top:402.15px;width:13.60px;height:14.85px;background:#dad8d2;border-left:1px solid #ebebe8;border-top:1px solid #ebebe8;border-bottom:1.6px solid #404040;border-right:1px solid #8a8a8a;box-sizing:border-box"></div>
<svg class="b" style="left:115.70px;top:406.55px" width="9" height="5" viewBox="0 0 9 5"><polygon points="0,0 8.4,0 4.2,4.1" fill="#000"/></svg>
<div class="b" style="left:358.80px;top:402.15px;width:13.20px;height:14.85px;background:#dad8d2;border-left:1px solid #ebebe8;border-top:1px solid #ebebe8;border-bottom:1.6px solid #404040;border-right:1px solid #8a8a8a;box-sizing:border-box"></div>
<svg class="b" style="left:361.10px;top:406.55px" width="9" height="5" viewBox="0 0 9 5"><polygon points="0,0 8.4,0 4.2,4.1" fill="#000"/></svg>
<div class="b" style="left:523.30px;top:402.15px;width:13.50px;height:14.85px;background:#dad8d2;border-left:1px solid #ebebe8;border-top:1px solid #ebebe8;border-bottom:1.6px solid #404040;border-right:1px solid #8a8a8a;box-sizing:border-box"></div>
<svg class="b" style="left:525.75px;top:406.55px" width="9" height="5" viewBox="0 0 9 5"><polygon points="0,0 8.4,0 4.2,4.1" fill="#000"/></svg>
<div class="b" style="left:774.00px;top:402.15px;width:13.60px;height:14.85px;background:#dad8d2;border-left:1px solid #ebebe8;border-top:1px solid #ebebe8;border-bottom:1.6px solid #404040;border-right:1px solid #8a8a8a;box-sizing:border-box"></div>
<svg class="b" style="left:776.50px;top:406.55px" width="9" height="5" viewBox="0 0 9 5"><polygon points="0,0 8.4,0 4.2,4.1" fill="#000"/></svg>
<div class="b" style="left:959.60px;top:402.15px;width:13.00px;height:14.85px;background:#dad8d2;border-left:1px solid #ebebe8;border-top:1px solid #ebebe8;border-bottom:1.6px solid #404040;border-right:1px solid #8a8a8a;box-sizing:border-box"></div>
<svg class="b" style="left:961.80px;top:406.55px" width="9" height="5" viewBox="0 0 9 5"><polygon points="0,0 8.4,0 4.2,4.1" fill="#000"/></svg>
<div class="b" style="left:1141.60px;top:402.15px;width:13.00px;height:14.85px;background:#dad8d2;border-left:1px solid #ebebe8;border-top:1px solid #ebebe8;border-bottom:1.6px solid #404040;border-right:1px solid #8a8a8a;box-sizing:border-box"></div>
<svg class="b" style="left:1143.80px;top:406.55px" width="9" height="5" viewBox="0 0 9 5"><polygon points="0,0 8.4,0 4.2,4.1" fill="#000"/></svg>
<div class="b" style="left:1453.50px;top:402.15px;width:13.10px;height:14.85px;background:#dad8d2;border-left:1px solid #ebebe8;border-top:1px solid #ebebe8;border-bottom:1.6px solid #404040;border-right:1px solid #8a8a8a;box-sizing:border-box"></div>
<svg class="b" style="left:1455.75px;top:406.55px" width="9" height="5" viewBox="0 0 9 5"><polygon points="0,0 8.4,0 4.2,4.1" fill="#000"/></svg>
<div class="b" style="left:1566.00px;top:402.15px;width:12.00px;height:14.85px;background:#dad8d2;border-left:1px solid #ebebe8;border-top:1px solid #ebebe8;border-bottom:1.6px solid #404040;border-right:1px solid #8a8a8a;box-sizing:border-box"></div>
<svg class="b" style="left:1567.70px;top:406.55px" width="9" height="5" viewBox="0 0 9 5"><polygon points="0,0 8.4,0 4.2,4.1" fill="#000"/></svg>
<div class="t" style="left:20.10px;top:402.69px;color:#000;font-size:12px;line-height:14.0px;transform:scaleX(0.875);letter-spacing:0px">Úrok roční</div>
<div class="t" style="left:131.80px;top:402.69px;color:#000;font-size:12px;line-height:14.0px;transform:scaleX(0.875);letter-spacing:0px">úrok z prodlení</div>
<div class="t" style="right:1150.90px;top:402.69px;color:#000;font-size:12px;line-height:14.0px;transform:scaleX(0.875);transform-origin:100% 0;letter-spacing:0.2px;">250 000</div>
<div class="t" style="right:1098.00px;top:402.69px;color:#000;font-size:12px;line-height:14.0px;transform:scaleX(0.875);transform-origin:100% 0;">6</div>
<div class="t" style="left:508.80px;top:402.69px;color:#000;font-size:12px;line-height:14.0px;transform:scaleX(0.875);letter-spacing:0px">%</div>
<div class="t" style="left:541.50px;top:402.69px;color:#000;font-size:12px;line-height:14.0px;transform:scaleX(0.875);letter-spacing:0px">02.09.2024</div>
<div class="t" style="left:600.50px;top:402.69px;color:#000;font-size:12px;line-height:14.0px;transform:scaleX(0.875);letter-spacing:0px">zaplacení</div>
<div class="t" style="left:1471.30px;top:418.54px;color:#000;font-size:12px;line-height:14.0px;transform:scaleX(0.875);letter-spacing:0.2px">47 Cm 94/2024-10</div>
<div class="b" style="left:113.20px;top:418.00px;width:13.60px;height:14.85px;background:#dad8d2;border-left:1px solid #ebebe8;border-top:1px solid #ebebe8;border-bottom:1.6px solid #404040;border-right:1px solid #8a8a8a;box-sizing:border-box"></div>
<svg class="b" style="left:115.70px;top:422.40px" width="9" height="5" viewBox="0 0 9 5"><polygon points="0,0 8.4,0 4.2,4.1" fill="#000"/></svg>
<div class="b" style="left:358.80px;top:418.00px;width:13.20px;height:14.85px;background:#dad8d2;border-left:1px solid #ebebe8;border-top:1px solid #ebebe8;border-bottom:1.6px solid #404040;border-right:1px solid #8a8a8a;box-sizing:border-box"></div>
<svg class="b" style="left:361.10px;top:422.40px" width="9" height="5" viewBox="0 0 9 5"><polygon points="0,0 8.4,0 4.2,4.1" fill="#000"/></svg>
<div class="b" style="left:523.30px;top:418.00px;width:13.50px;height:14.85px;background:#dad8d2;border-left:1px solid #ebebe8;border-top:1px solid #ebebe8;border-bottom:1.6px solid #404040;border-right:1px solid #8a8a8a;box-sizing:border-box"></div>
<svg class="b" style="left:525.75px;top:422.40px" width="9" height="5" viewBox="0 0 9 5"><polygon points="0,0 8.4,0 4.2,4.1" fill="#000"/></svg>
<div class="b" style="left:774.00px;top:418.00px;width:13.60px;height:14.85px;background:#dad8d2;border-left:1px solid #ebebe8;border-top:1px solid #ebebe8;border-bottom:1.6px solid #404040;border-right:1px solid #8a8a8a;box-sizing:border-box"></div>
<svg class="b" style="left:776.50px;top:422.40px" width="9" height="5" viewBox="0 0 9 5"><polygon points="0,0 8.4,0 4.2,4.1" fill="#000"/></svg>
<div class="b" style="left:959.60px;top:418.00px;width:13.00px;height:14.85px;background:#dad8d2;border-left:1px solid #ebebe8;border-top:1px solid #ebebe8;border-bottom:1.6px solid #404040;border-right:1px solid #8a8a8a;box-sizing:border-box"></div>
<svg class="b" style="left:961.80px;top:422.40px" width="9" height="5" viewBox="0 0 9 5"><polygon points="0,0 8.4,0 4.2,4.1" fill="#000"/></svg>
<div class="b" style="left:1141.60px;top:418.00px;width:13.00px;height:14.85px;background:#dad8d2;border-left:1px solid #ebebe8;border-top:1px solid #ebebe8;border-bottom:1.6px solid #404040;border-right:1px solid #8a8a8a;box-sizing:border-box"></div>
<svg class="b" style="left:1143.80px;top:422.40px" width="9" height="5" viewBox="0 0 9 5"><polygon points="0,0 8.4,0 4.2,4.1" fill="#000"/></svg>
<div class="b" style="left:1453.50px;top:418.00px;width:13.10px;height:14.85px;background:#dad8d2;border-left:1px solid #ebebe8;border-top:1px solid #ebebe8;border-bottom:1.6px solid #404040;border-right:1px solid #8a8a8a;box-sizing:border-box"></div>
<svg class="b" style="left:1455.75px;top:422.40px" width="9" height="5" viewBox="0 0 9 5"><polygon points="0,0 8.4,0 4.2,4.1" fill="#000"/></svg>
<div class="b" style="left:1566.00px;top:418.00px;width:12.00px;height:14.85px;background:#dad8d2;border-left:1px solid #ebebe8;border-top:1px solid #ebebe8;border-bottom:1.6px solid #404040;border-right:1px solid #8a8a8a;box-sizing:border-box"></div>
<svg class="b" style="left:1567.70px;top:422.40px" width="9" height="5" viewBox="0 0 9 5"><polygon points="0,0 8.4,0 4.2,4.1" fill="#000"/></svg>
<div class="t" style="left:20.10px;top:418.54px;color:#000;font-size:12px;line-height:14.0px;transform:scaleX(0.875);letter-spacing:0px">Příslušenství</div>
<div class="t" style="left:131.80px;top:418.54px;color:#000;font-size:12px;line-height:14.0px;transform:scaleX(0.875);letter-spacing:0px">směnečná odměna</div>
<div class="t" style="right:1150.90px;top:418.54px;color:#000;font-size:12px;line-height:14.0px;transform:scaleX(0.875);transform-origin:100% 0;">833</div>
<div class="t" style="left:1471.30px;top:434.39px;color:#000;font-size:12px;line-height:14.0px;transform:scaleX(0.875);letter-spacing:0.2px">47 Cm 94/2024-10</div>
<div class="b" style="left:113.20px;top:433.85px;width:13.60px;height:14.85px;background:#dad8d2;border-left:1px solid #ebebe8;border-top:1px solid #ebebe8;border-bottom:1.6px solid #404040;border-right:1px solid #8a8a8a;box-sizing:border-box"></div>
<svg class="b" style="left:115.70px;top:438.25px" width="9" height="5" viewBox="0 0 9 5"><polygon points="0,0 8.4,0 4.2,4.1" fill="#000"/></svg>
<div class="b" style="left:358.80px;top:433.85px;width:13.20px;height:14.85px;background:#dad8d2;border-left:1px solid #ebebe8;border-top:1px solid #ebebe8;border-bottom:1.6px solid #404040;border-right:1px solid #8a8a8a;box-sizing:border-box"></div>
<svg class="b" style="left:361.10px;top:438.25px" width="9" height="5" viewBox="0 0 9 5"><polygon points="0,0 8.4,0 4.2,4.1" fill="#000"/></svg>
<div class="b" style="left:523.30px;top:433.85px;width:13.50px;height:14.85px;background:#dad8d2;border-left:1px solid #ebebe8;border-top:1px solid #ebebe8;border-bottom:1.6px solid #404040;border-right:1px solid #8a8a8a;box-sizing:border-box"></div>
<svg class="b" style="left:525.75px;top:438.25px" width="9" height="5" viewBox="0 0 9 5"><polygon points="0,0 8.4,0 4.2,4.1" fill="#000"/></svg>
<div class="b" style="left:774.00px;top:433.85px;width:13.60px;height:14.85px;background:#dad8d2;border-left:1px solid #ebebe8;border-top:1px solid #ebebe8;border-bottom:1.6px solid #404040;border-right:1px solid #8a8a8a;box-sizing:border-box"></div>
<svg class="b" style="left:776.50px;top:438.25px" width="9" height="5" viewBox="0 0 9 5"><polygon points="0,0 8.4,0 4.2,4.1" fill="#000"/></svg>
<div class="b" style="left:959.60px;top:433.85px;width:13.00px;height:14.85px;background:#dad8d2;border-left:1px solid #ebebe8;border-top:1px solid #ebebe8;border-bottom:1.6px solid #404040;border-right:1px solid #8a8a8a;box-sizing:border-box"></div>
<svg class="b" style="left:961.80px;top:438.25px" width="9" height="5" viewBox="0 0 9 5"><polygon points="0,0 8.4,0 4.2,4.1" fill="#000"/></svg>
<div class="b" style="left:1141.60px;top:433.85px;width:13.00px;height:14.85px;background:#dad8d2;border-left:1px solid #ebebe8;border-top:1px solid #ebebe8;border-bottom:1.6px solid #404040;border-right:1px solid #8a8a8a;box-sizing:border-box"></div>
<svg class="b" style="left:1143.80px;top:438.25px" width="9" height="5" viewBox="0 0 9 5"><polygon points="0,0 8.4,0 4.2,4.1" fill="#000"/></svg>
<div class="b" style="left:1453.50px;top:433.85px;width:13.10px;height:14.85px;background:#dad8d2;border-left:1px solid #ebebe8;border-top:1px solid #ebebe8;border-bottom:1.6px solid #404040;border-right:1px solid #8a8a8a;box-sizing:border-box"></div>
<svg class="b" style="left:1455.75px;top:438.25px" width="9" height="5" viewBox="0 0 9 5"><polygon points="0,0 8.4,0 4.2,4.1" fill="#000"/></svg>
<div class="b" style="left:1566.00px;top:433.85px;width:12.00px;height:14.85px;background:#dad8d2;border-left:1px solid #ebebe8;border-top:1px solid #ebebe8;border-bottom:1.6px solid #404040;border-right:1px solid #8a8a8a;box-sizing:border-box"></div>
<svg class="b" style="left:1567.70px;top:438.25px" width="9" height="5" viewBox="0 0 9 5"><polygon points="0,0 8.4,0 4.2,4.1" fill="#000"/></svg>
<div class="t" style="left:20.10px;top:434.39px;color:#000;font-size:12px;line-height:14.0px;transform:scaleX(0.875);letter-spacing:0px">Náklady nal. řízení</div>
<div class="t" style="left:131.80px;top:434.39px;color:#000;font-size:12px;line-height:14.0px;transform:scaleX(0.875);letter-spacing:0px">náklady nalézacího řízení</div>
<div class="t" style="right:1150.90px;top:434.39px;color:#000;font-size:12px;line-height:14.0px;transform:scaleX(0.875);transform-origin:100% 0;letter-spacing:0.2px;">44 256,50</div>
<div class="b" style="left:113.20px;top:449.70px;width:13.60px;height:14.85px;background:#dad8d2;border-left:1px solid #ebebe8;border-top:1px solid #ebebe8;border-bottom:1.6px solid #404040;border-right:1px solid #8a8a8a;box-sizing:border-box"></div>
<svg class="b" style="left:115.70px;top:454.10px" width="9" height="5" viewBox="0 0 9 5"><polygon points="0,0 8.4,0 4.2,4.1" fill="#000"/></svg>
<div class="b" style="left:358.80px;top:449.70px;width:13.20px;height:14.85px;background:#dad8d2;border-left:1px solid #ebebe8;border-top:1px solid #ebebe8;border-bottom:1.6px solid #404040;border-right:1px solid #8a8a8a;box-sizing:border-box"></div>
<svg class="b" style="left:361.10px;top:454.10px" width="9" height="5" viewBox="0 0 9 5"><polygon points="0,0 8.4,0 4.2,4.1" fill="#000"/></svg>
<div class="b" style="left:523.30px;top:449.70px;width:13.50px;height:14.85px;background:#dad8d2;border-left:1px solid #ebebe8;border-top:1px solid #ebebe8;border-bottom:1.6px solid #404040;border-right:1px solid #8a8a8a;box-sizing:border-box"></div>
<svg class="b" style="left:525.75px;top:454.10px" width="9" height="5" viewBox="0 0 9 5"><polygon points="0,0 8.4,0 4.2,4.1" fill="#000"/></svg>
<div class="b" style="left:774.00px;top:449.70px;width:13.60px;height:14.85px;background:#dad8d2;border-left:1px solid #ebebe8;border-top:1px solid #ebebe8;border-bottom:1.6px solid #404040;border-right:1px solid #8a8a8a;box-sizing:border-box"></div>
<svg class="b" style="left:776.50px;top:454.10px" width="9" height="5" viewBox="0 0 9 5"><polygon points="0,0 8.4,0 4.2,4.1" fill="#000"/></svg>
<div class="b" style="left:959.60px;top:449.70px;width:13.00px;height:14.85px;background:#dad8d2;border-left:1px solid #ebebe8;border-top:1px solid #ebebe8;border-bottom:1.6px solid #404040;border-right:1px solid #8a8a8a;box-sizing:border-box"></div>
<svg class="b" style="left:961.80px;top:454.10px" width="9" height="5" viewBox="0 0 9 5"><polygon points="0,0 8.4,0 4.2,4.1" fill="#000"/></svg>
<div class="b" style="left:1141.60px;top:449.70px;width:13.00px;height:14.85px;background:#dad8d2;border-left:1px solid #ebebe8;border-top:1px solid #ebebe8;border-bottom:1.6px solid #404040;border-right:1px solid #8a8a8a;box-sizing:border-box"></div>
<svg class="b" style="left:1143.80px;top:454.10px" width="9" height="5" viewBox="0 0 9 5"><polygon points="0,0 8.4,0 4.2,4.1" fill="#000"/></svg>
<div class="b" style="left:1453.50px;top:449.70px;width:13.10px;height:14.85px;background:#dad8d2;border-left:1px solid #ebebe8;border-top:1px solid #ebebe8;border-bottom:1.6px solid #404040;border-right:1px solid #8a8a8a;box-sizing:border-box"></div>
<svg class="b" style="left:1455.75px;top:454.10px" width="9" height="5" viewBox="0 0 9 5"><polygon points="0,0 8.4,0 4.2,4.1" fill="#000"/></svg>
<div class="b" style="left:1566.00px;top:449.70px;width:12.00px;height:14.85px;background:#dad8d2;border-left:1px solid #ebebe8;border-top:1px solid #ebebe8;border-bottom:1.6px solid #404040;border-right:1px solid #8a8a8a;box-sizing:border-box"></div>
<svg class="b" style="left:1567.70px;top:454.10px" width="9" height="5" viewBox="0 0 9 5"><polygon points="0,0 8.4,0 4.2,4.1" fill="#000"/></svg>
<div class="t" style="left:20.10px;top:450.24px;color:#000;font-size:12px;line-height:14.0px;transform:scaleX(0.875);letter-spacing:0px">Náklady oprávněného</div>
<div class="t" style="left:131.80px;top:450.24px;color:#000;font-size:12px;line-height:14.0px;transform:scaleX(0.875);letter-spacing:0px">náklady právního zastoupení</div>
<div class="t" style="right:1150.90px;top:450.24px;color:#000;font-size:12px;line-height:14.0px;transform:scaleX(0.875);transform-origin:100% 0;letter-spacing:0.2px;">11 080</div>
<div class="t" style="left:660.70px;top:450.24px;color:#000;font-size:12px;line-height:14.0px;transform:scaleX(0.875);letter-spacing:0.29px">PZ-177/1996 nov.2025</div>
<div class="t" style="left:792.30px;top:450.24px;color:#000;font-size:12px;line-height:14.0px;transform:scaleX(0.875);letter-spacing:0px">11.04.2025</div>
<div class="t" style="right:695.10px;top:450.24px;color:#000;font-size:12px;line-height:14.0px;transform:scaleX(0.875);transform-origin:100% 0;letter-spacing:0.2px;">470000</div>
<div class="t" style="left:911.70px;top:450.24px;color:#000;font-size:12px;line-height:14.0px;transform:scaleX(0.875);letter-spacing:0px">N</div>
<div class="t" style="right:566.50px;top:450.24px;color:#000;font-size:12px;line-height:14.0px;transform:scaleX(0.875);transform-origin:100% 0;">2</div>
<div class="t" style="right:510.20px;top:450.24px;color:#000;font-size:12px;line-height:14.0px;transform:scaleX(0.875);transform-origin:100% 0;">450</div>
<div class="t" style="left:1096.60px;top:450.24px;color:#000;font-size:12px;line-height:14.0px;transform:scaleX(0.875);letter-spacing:0px">N</div>
<svg class="b" style="left:1155.6px;top:449.50px" width="14" height="14" viewBox="0 0 14 14"><rect x="0.5" y="0.5" width="13" height="13" fill="#e9ecef" stroke="#a0a6ac"/><rect x="1.5" y="2" width="11" height="2.5" fill="#8bb4dc"/><rect x="2" y="6" width="10" height="1" fill="#9aa"/><rect x="2" y="8.5" width="10" height="1" fill="#9aa"/><rect x="2" y="11" width="10" height="1" fill="#9aa"/></svg>
<div class="t" style="left:1471.30px;top:466.09px;color:#000;font-size:12px;line-height:14.0px;transform:scaleX(0.875);letter-spacing:0.12px">20 Cm 243/2024-17</div>
<div class="b" style="left:113.20px;top:465.55px;width:13.60px;height:14.85px;background:#dad8d2;border-left:1px solid #ebebe8;border-top:1px solid #ebebe8;border-bottom:1.6px solid #404040;border-right:1px solid #8a8a8a;box-sizing:border-box"></div>
<svg class="b" style="left:115.70px;top:469.95px" width="9" height="5" viewBox="0 0 9 5"><polygon points="0,0 8.4,0 4.2,4.1" fill="#000"/></svg>
<div class="b" style="left:358.80px;top:465.55px;width:13.20px;height:14.85px;background:#dad8d2;border-left:1px solid #ebebe8;border-top:1px solid #ebebe8;border-bottom:1.6px solid #404040;border-right:1px solid #8a8a8a;box-sizing:border-box"></div>
<svg class="b" style="left:361.10px;top:469.95px" width="9" height="5" viewBox="0 0 9 5"><polygon points="0,0 8.4,0 4.2,4.1" fill="#000"/></svg>
<div class="b" style="left:523.30px;top:465.55px;width:13.50px;height:14.85px;background:#dad8d2;border-left:1px solid #ebebe8;border-top:1px solid #ebebe8;border-bottom:1.6px solid #404040;border-right:1px solid #8a8a8a;box-sizing:border-box"></div>
<svg class="b" style="left:525.75px;top:469.95px" width="9" height="5" viewBox="0 0 9 5"><polygon points="0,0 8.4,0 4.2,4.1" fill="#000"/></svg>
<div class="b" style="left:774.00px;top:465.55px;width:13.60px;height:14.85px;background:#dad8d2;border-left:1px solid #ebebe8;border-top:1px solid #ebebe8;border-bottom:1.6px solid #404040;border-right:1px solid #8a8a8a;box-sizing:border-box"></div>
<svg class="b" style="left:776.50px;top:469.95px" width="9" height="5" viewBox="0 0 9 5"><polygon points="0,0 8.4,0 4.2,4.1" fill="#000"/></svg>
<div class="b" style="left:959.60px;top:465.55px;width:13.00px;height:14.85px;background:#dad8d2;border-left:1px solid #ebebe8;border-top:1px solid #ebebe8;border-bottom:1.6px solid #404040;border-right:1px solid #8a8a8a;box-sizing:border-box"></div>
<svg class="b" style="left:961.80px;top:469.95px" width="9" height="5" viewBox="0 0 9 5"><polygon points="0,0 8.4,0 4.2,4.1" fill="#000"/></svg>
<div class="b" style="left:1141.60px;top:465.55px;width:13.00px;height:14.85px;background:#dad8d2;border-left:1px solid #ebebe8;border-top:1px solid #ebebe8;border-bottom:1.6px solid #404040;border-right:1px solid #8a8a8a;box-sizing:border-box"></div>
<svg class="b" style="left:1143.80px;top:469.95px" width="9" height="5" viewBox="0 0 9 5"><polygon points="0,0 8.4,0 4.2,4.1" fill="#000"/></svg>
<div class="b" style="left:1453.50px;top:465.55px;width:13.10px;height:14.85px;background:#dad8d2;border-left:1px solid #ebebe8;border-top:1px solid #ebebe8;border-bottom:1.6px solid #404040;border-right:1px solid #8a8a8a;box-sizing:border-box"></div>
<svg class="b" style="left:1455.75px;top:469.95px" width="9" height="5" viewBox="0 0 9 5"><polygon points="0,0 8.4,0 4.2,4.1" fill="#000"/></svg>
<div class="b" style="left:1566.00px;top:465.55px;width:12.00px;height:14.85px;background:#dad8d2;border-left:1px solid #ebebe8;border-top:1px solid #ebebe8;border-bottom:1.6px solid #404040;border-right:1px solid #8a8a8a;box-sizing:border-box"></div>
<svg class="b" style="left:1567.70px;top:469.95px" width="9" height="5" viewBox="0 0 9 5"><polygon points="0,0 8.4,0 4.2,4.1" fill="#000"/></svg>
<div class="t" style="left:20.10px;top:466.09px;color:#000;font-size:12px;line-height:14.0px;transform:scaleX(0.875);letter-spacing:0px">Jistina</div>
<div class="t" style="left:131.80px;top:466.09px;color:#000;font-size:12px;line-height:14.0px;transform:scaleX(0.875);letter-spacing:0px">směnečný peníz</div>
<div class="t" style="right:1150.90px;top:466.09px;color:#000;font-size:12px;line-height:14.0px;transform:scaleX(0.875);transform-origin:100% 0;letter-spacing:0.2px;">220 000</div>
<div class="t" style="left:1471.30px;top:481.94px;color:#000;font-size:12px;line-height:14.0px;transform:scaleX(0.875);letter-spacing:0.12px">20 Cm 243/2024-17</div>
<div class="b" style="left:113.20px;top:481.40px;width:13.60px;height:14.85px;background:#dad8d2;border-left:1px solid #ebebe8;border-top:1px solid #ebebe8;border-bottom:1.6px solid #404040;border-right:1px solid #8a8a8a;box-sizing:border-box"></div>
<svg class="b" style="left:115.70px;top:485.80px" width="9" height="5" viewBox="0 0 9 5"><polygon points="0,0 8.4,0 4.2,4.1" fill="#000"/></svg>
<div class="b" style="left:358.80px;top:481.40px;width:13.20px;height:14.85px;background:#dad8d2;border-left:1px solid #ebebe8;border-top:1px solid #ebebe8;border-bottom:1.6px solid #404040;border-right:1px solid #8a8a8a;box-sizing:border-box"></div>
<svg class="b" style="left:361.10px;top:485.80px" width="9" height="5" viewBox="0 0 9 5"><polygon points="0,0 8.4,0 4.2,4.1" fill="#000"/></svg>
<div class="b" style="left:523.30px;top:481.40px;width:13.50px;height:14.85px;background:#dad8d2;border-left:1px solid #ebebe8;border-top:1px solid #ebebe8;border-bottom:1.6px solid #404040;border-right:1px solid #8a8a8a;box-sizing:border-box"></div>
<svg class="b" style="left:525.75px;top:485.80px" width="9" height="5" viewBox="0 0 9 5"><polygon points="0,0 8.4,0 4.2,4.1" fill="#000"/></svg>
<div class="b" style="left:774.00px;top:481.40px;width:13.60px;height:14.85px;background:#dad8d2;border-left:1px solid #ebebe8;border-top:1px solid #ebebe8;border-bottom:1.6px solid #404040;border-right:1px solid #8a8a8a;box-sizing:border-box"></div>
<svg class="b" style="left:776.50px;top:485.80px" width="9" height="5" viewBox="0 0 9 5"><polygon points="0,0 8.4,0 4.2,4.1" fill="#000"/></svg>
<div class="b" style="left:959.60px;top:481.40px;width:13.00px;height:14.85px;background:#dad8d2;border-left:1px solid #ebebe8;border-top:1px solid #ebebe8;border-bottom:1.6px solid #404040;border-right:1px solid #8a8a8a;box-sizing:border-box"></div>
<svg class="b" style="left:961.80px;top:485.80px" width="9" height="5" viewBox="0 0 9 5"><polygon points="0,0 8.4,0 4.2,4.1" fill="#000"/></svg>
<div class="b" style="left:1141.60px;top:481.40px;width:13.00px;height:14.85px;background:#dad8d2;border-left:1px solid #ebebe8;border-top:1px solid #ebebe8;border-bottom:1.6px solid #404040;border-right:1px solid #8a8a8a;box-sizing:border-box"></div>
<svg class="b" style="left:1143.80px;top:485.80px" width="9" height="5" viewBox="0 0 9 5"><polygon points="0,0 8.4,0 4.2,4.1" fill="#000"/></svg>
<div class="b" style="left:1453.50px;top:481.40px;width:13.10px;height:14.85px;background:#dad8d2;border-left:1px solid #ebebe8;border-top:1px solid #ebebe8;border-bottom:1.6px solid #404040;border-right:1px solid #8a8a8a;box-sizing:border-box"></div>
<svg class="b" style="left:1455.75px;top:485.80px" width="9" height="5" viewBox="0 0 9 5"><polygon points="0,0 8.4,0 4.2,4.1" fill="#000"/></svg>
<div class="b" style="left:1566.00px;top:481.40px;width:12.00px;height:14.85px;background:#dad8d2;border-left:1px solid #ebebe8;border-top:1px solid #ebebe8;border-bottom:1.6px solid #404040;border-right:1px solid #8a8a8a;box-sizing:border-box"></div>
<svg class="b" style="left:1567.70px;top:485.80px" width="9" height="5" viewBox="0 0 9 5"><polygon points="0,0 8.4,0 4.2,4.1" fill="#000"/></svg>
<div class="t" style="left:20.10px;top:481.94px;color:#000;font-size:12px;line-height:14.0px;transform:scaleX(0.875);letter-spacing:0px">Úrok roční</div>
<div class="t" style="left:131.80px;top:481.94px;color:#000;font-size:12px;line-height:14.0px;transform:scaleX(0.875);letter-spacing:0px">úrok z prodlení</div>
<div class="t" style="right:1150.90px;top:481.94px;color:#000;font-size:12px;line-height:14.0px;transform:scaleX(0.875);transform-origin:100% 0;letter-spacing:0.2px;">220 000</div>
<div class="t" style="right:1098.00px;top:481.94px;color:#000;font-size:12px;line-height:14.0px;transform:scaleX(0.875);transform-origin:100% 0;">6</div>
<div class="t" style="left:508.80px;top:481.94px;color:#000;font-size:12px;line-height:14.0px;transform:scaleX(0.875);letter-spacing:0px">%</div>
<div class="t" style="left:541.50px;top:481.94px;color:#000;font-size:12px;line-height:14.0px;transform:scaleX(0.875);letter-spacing:0px">02.11.2024</div>
<div class="t" style="left:600.50px;top:481.94px;color:#000;font-size:12px;line-height:14.0px;transform:scaleX(0.875);letter-spacing:0px">zaplacení</div>
<div class="t" style="left:1471.30px;top:497.79px;color:#000;font-size:12px;line-height:14.0px;transform:scaleX(0.875);letter-spacing:0.12px">20 Cm 243/2024-17</div>
<div class="b" style="left:113.20px;top:497.25px;width:13.60px;height:14.85px;background:#dad8d2;border-left:1px solid #ebebe8;border-top:1px solid #ebebe8;border-bottom:1.6px solid #404040;border-right:1px solid #8a8a8a;box-sizing:border-box"></div>
<svg class="b" style="left:115.70px;top:501.65px" width="9" height="5" viewBox="0 0 9 5"><polygon points="0,0 8.4,0 4.2,4.1" fill="#000"/></svg>
<div class="b" style="left:358.80px;top:497.25px;width:13.20px;height:14.85px;background:#dad8d2;border-left:1px solid #ebebe8;border-top:1px solid #ebebe8;border-bottom:1.6px solid #404040;border-right:1px solid #8a8a8a;box-sizing:border-box"></div>
<svg class="b" style="left:361.10px;top:501.65px" width="9" height="5" viewBox="0 0 9 5"><polygon points="0,0 8.4,0 4.2,4.1" fill="#000"/></svg>
<div class="b" style="left:523.30px;top:497.25px;width:13.50px;height:14.85px;background:#dad8d2;border-left:1px solid #ebebe8;border-top:1px solid #ebebe8;border-bottom:1.6px solid #404040;border-right:1px solid #8a8a8a;box-sizing:border-box"></div>
<svg class="b" style="left:525.75px;top:501.65px" width="9" height="5" viewBox="0 0 9 5"><polygon points="0,0 8.4,0 4.2,4.1" fill="#000"/></svg>
<div class="b" style="left:774.00px;top:497.25px;width:13.60px;height:14.85px;background:#dad8d2;border-left:1px solid #ebebe8;border-top:1px solid #ebebe8;border-bottom:1.6px solid #404040;border-right:1px solid #8a8a8a;box-sizing:border-box"></div>
<svg class="b" style="left:776.50px;top:501.65px" width="9" height="5" viewBox="0 0 9 5"><polygon points="0,0 8.4,0 4.2,4.1" fill="#000"/></svg>
<div class="b" style="left:959.60px;top:497.25px;width:13.00px;height:14.85px;background:#dad8d2;border-left:1px solid #ebebe8;border-top:1px solid #ebebe8;border-bottom:1.6px solid #404040;border-right:1px solid #8a8a8a;box-sizing:border-box"></div>
<svg class="b" style="left:961.80px;top:501.65px" width="9" height="5" viewBox="0 0 9 5"><polygon points="0,0 8.4,0 4.2,4.1" fill="#000"/></svg>
<div class="b" style="left:1141.60px;top:497.25px;width:13.00px;height:14.85px;background:#dad8d2;border-left:1px solid #ebebe8;border-top:1px solid #ebebe8;border-bottom:1.6px solid #404040;border-right:1px solid #8a8a8a;box-sizing:border-box"></div>
<svg class="b" style="left:1143.80px;top:501.65px" width="9" height="5" viewBox="0 0 9 5"><polygon points="0,0 8.4,0 4.2,4.1" fill="#000"/></svg>
<div class="b" style="left:1453.50px;top:497.25px;width:13.10px;height:14.85px;background:#dad8d2;border-left:1px solid #ebebe8;border-top:1px solid #ebebe8;border-bottom:1.6px solid #404040;border-right:1px solid #8a8a8a;box-sizing:border-box"></div>
<svg class="b" style="left:1455.75px;top:501.65px" width="9" height="5" viewBox="0 0 9 5"><polygon points="0,0 8.4,0 4.2,4.1" fill="#000"/></svg>
<div class="b" style="left:1566.00px;top:497.25px;width:12.00px;height:14.85px;background:#dad8d2;border-left:1px solid #ebebe8;border-top:1px solid #ebebe8;border-bottom:1.6px solid #404040;border-right:1px solid #8a8a8a;box-sizing:border-box"></div>
<svg class="b" style="left:1567.70px;top:501.65px" width="9" height="5" viewBox="0 0 9 5"><polygon points="0,0 8.4,0 4.2,4.1" fill="#000"/></svg>
<div class="t" style="left:20.10px;top:497.79px;color:#000;font-size:12px;line-height:14.0px;transform:scaleX(0.875);letter-spacing:0px">Příslušenství</div>
<div class="t" style="left:131.80px;top:497.79px;color:#000;font-size:12px;line-height:14.0px;transform:scaleX(0.875);letter-spacing:0px">směnečná odměna</div>
<div class="t" style="right:1150.90px;top:497.79px;color:#000;font-size:12px;line-height:14.0px;transform:scaleX(0.875);transform-origin:100% 0;">733</div>
<div class="t" style="left:1471.30px;top:513.64px;color:#000;font-size:12px;line-height:14.0px;transform:scaleX(0.875);letter-spacing:0.12px">20 Cm 243/2024-17</div>
<div class="b" style="left:113.20px;top:513.10px;width:13.60px;height:14.85px;background:#dad8d2;border-left:1px solid #ebebe8;border-top:1px solid #ebebe8;border-bottom:1.6px solid #404040;border-right:1px solid #8a8a8a;box-sizing:border-box"></div>
<svg class="b" style="left:115.70px;top:517.50px" width="9" height="5" viewBox="0 0 9 5"><polygon points="0,0 8.4,0 4.2,4.1" fill="#000"/></svg>
<div class="b" style="left:358.80px;top:513.10px;width:13.20px;height:14.85px;background:#dad8d2;border-left:1px solid #ebebe8;border-top:1px solid #ebebe8;border-bottom:1.6px solid #404040;border-right:1px solid #8a8a8a;box-sizing:border-box"></div>
<svg class="b" style="left:361.10px;top:517.50px" width="9" height="5" viewBox="0 0 9 5"><polygon points="0,0 8.4,0 4.2,4.1" fill="#000"/></svg>
<div class="b" style="left:523.30px;top:513.10px;width:13.50px;height:14.85px;background:#dad8d2;border-left:1px solid #ebebe8;border-top:1px solid #ebebe8;border-bottom:1.6px solid #404040;border-right:1px solid #8a8a8a;box-sizing:border-box"></div>
<svg class="b" style="left:525.75px;top:517.50px" width="9" height="5" viewBox="0 0 9 5"><polygon points="0,0 8.4,0 4.2,4.1" fill="#000"/></svg>
<div class="b" style="left:774.00px;top:513.10px;width:13.60px;height:14.85px;background:#dad8d2;border-left:1px solid #ebebe8;border-top:1px solid #ebebe8;border-bottom:1.6px solid #404040;border-right:1px solid #8a8a8a;box-sizing:border-box"></div>
<svg class="b" style="left:776.50px;top:517.50px" width="9" height="5" viewBox="0 0 9 5"><polygon points="0,0 8.4,0 4.2,4.1" fill="#000"/></svg>
<div class="b" style="left:959.60px;top:513.10px;width:13.00px;height:14.85px;background:#dad8d2;border-left:1px solid #ebebe8;border-top:1px solid #ebebe8;border-bottom:1.6px solid #404040;border-right:1px solid #8a8a8a;box-sizing:border-box"></div>
<svg class="b" style="left:961.80px;top:517.50px" width="9" height="5" viewBox="0 0 9 5"><polygon points="0,0 8.4,0 4.2,4.1" fill="#000"/></svg>
<div class="b" style="left:1141.60px;top:513.10px;width:13.00px;height:14.85px;background:#dad8d2;border-left:1px solid #ebebe8;border-top:1px solid #ebebe8;border-bottom:1.6px solid #404040;border-right:1px solid #8a8a8a;box-sizing:border-box"></div>
<svg class="b" style="left:1143.80px;top:517.50px" width="9" height="5" viewBox="0 0 9 5"><polygon points="0,0 8.4,0 4.2,4.1" fill="#000"/></svg>
<div class="b" style="left:1453.50px;top:513.10px;width:13.10px;height:14.85px;background:#dad8d2;border-left:1px solid #ebebe8;border-top:1px solid #ebebe8;border-bottom:1.6px solid #404040;border-right:1px solid #8a8a8a;box-sizing:border-box"></div>
<svg class="b" style="left:1455.75px;top:517.50px" width="9" height="5" viewBox="0 0 9 5"><polygon points="0,0 8.4,0 4.2,4.1" fill="#000"/></svg>
<div class="b" style="left:1566.00px;top:513.10px;width:12.00px;height:14.85px;background:#dad8d2;border-left:1px solid #ebebe8;border-top:1px solid #ebebe8;border-bottom:1.6px solid #404040;border-right:1px solid #8a8a8a;box-sizing:border-box"></div>
<svg class="b" style="left:1567.70px;top:517.50px" width="9" height="5" viewBox="0 0 9 5"><polygon points="0,0 8.4,0 4.2,4.1" fill="#000"/></svg>
<div class="t" style="left:20.10px;top:513.64px;color:#000;font-size:12px;line-height:14.0px;transform:scaleX(0.875);letter-spacing:0px">Náklady nal. řízení</div>
<div class="t" style="left:131.80px;top:513.64px;color:#000;font-size:12px;line-height:14.0px;transform:scaleX(0.875);letter-spacing:0px">náklady nalézacího řízení</div>
<div class="t" style="right:1150.90px;top:513.64px;color:#000;font-size:12px;line-height:14.0px;transform:scaleX(0.875);transform-origin:100% 0;letter-spacing:0.2px;">40 016,50</div>
<div class="b" style="left:113.20px;top:528.95px;width:13.60px;height:14.85px;background:#dad8d2;border-left:1px solid #ebebe8;border-top:1px solid #ebebe8;border-bottom:1.6px solid #404040;border-right:1px solid #8a8a8a;box-sizing:border-box"></div>
<svg class="b" style="left:115.70px;top:533.35px" width="9" height="5" viewBox="0 0 9 5"><polygon points="0,0 8.4,0 4.2,4.1" fill="#000"/></svg>
<div class="b" style="left:358.80px;top:528.95px;width:13.20px;height:14.85px;background:#dad8d2;border-left:1px solid #ebebe8;border-top:1px solid #ebebe8;border-bottom:1.6px solid #404040;border-right:1px solid #8a8a8a;box-sizing:border-box"></div>
<svg class="b" style="left:361.10px;top:533.35px" width="9" height="5" viewBox="0 0 9 5"><polygon points="0,0 8.4,0 4.2,4.1" fill="#000"/></svg>
<div class="b" style="left:523.30px;top:528.95px;width:13.50px;height:14.85px;background:#dad8d2;border-left:1px solid #ebebe8;border-top:1px solid #ebebe8;border-bottom:1.6px solid #404040;border-right:1px solid #8a8a8a;box-sizing:border-box"></div>
<svg class="b" style="left:525.75px;top:533.35px" width="9" height="5" viewBox="0 0 9 5"><polygon points="0,0 8.4,0 4.2,4.1" fill="#000"/></svg>
<div class="b" style="left:774.00px;top:528.95px;width:13.60px;height:14.85px;background:#dad8d2;border-left:1px solid #ebebe8;border-top:1px solid #ebebe8;border-bottom:1.6px solid #404040;border-right:1px solid #8a8a8a;box-sizing:border-box"></div>
<svg class="b" style="left:776.50px;top:533.35px" width="9" height="5" viewBox="0 0 9 5"><polygon points="0,0 8.4,0 4.2,4.1" fill="#000"/></svg>
<div class="b" style="left:959.60px;top:528.95px;width:13.00px;height:14.85px;background:#dad8d2;border-left:1px solid #ebebe8;border-top:1px solid #ebebe8;border-bottom:1.6px solid #404040;border-right:1px solid #8a8a8a;box-sizing:border-box"></div>
<svg class="b" style="left:961.80px;top:533.35px" width="9" height="5" viewBox="0 0 9 5"><polygon points="0,0 8.4,0 4.2,4.1" fill="#000"/></svg>
<div class="b" style="left:1141.60px;top:528.95px;width:13.00px;height:14.85px;background:#dad8d2;border-left:1px solid #ebebe8;border-top:1px solid #ebebe8;border-bottom:1.6px solid #404040;border-right:1px solid #8a8a8a;box-sizing:border-box"></div>
<svg class="b" style="left:1143.80px;top:533.35px" width="9" height="5" viewBox="0 0 9 5"><polygon points="0,0 8.4,0 4.2,4.1" fill="#000"/></svg>
<div class="b" style="left:1453.50px;top:528.95px;width:13.10px;height:14.85px;background:#dad8d2;border-left:1px solid #ebebe8;border-top:1px solid #ebebe8;border-bottom:1.6px solid #404040;border-right:1px solid #8a8a8a;box-sizing:border-box"></div>
<svg class="b" style="left:1455.75px;top:533.35px" width="9" height="5" viewBox="0 0 9 5"><polygon points="0,0 8.4,0 4.2,4.1" fill="#000"/></svg>
<div class="b" style="left:1566.00px;top:528.95px;width:12.00px;height:14.85px;background:#dad8d2;border-left:1px solid #ebebe8;border-top:1px solid #ebebe8;border-bottom:1.6px solid #404040;border-right:1px solid #8a8a8a;box-sizing:border-box"></div>
<svg class="b" style="left:1567.70px;top:533.35px" width="9" height="5" viewBox="0 0 9 5"><polygon points="0,0 8.4,0 4.2,4.1" fill="#000"/></svg>
<div class="b" style="left:113.20px;top:544.80px;width:13.60px;height:14.85px;background:#dad8d2;border-left:1px solid #ebebe8;border-top:1px solid #ebebe8;border-bottom:1.6px solid #404040;border-right:1px solid #8a8a8a;box-sizing:border-box"></div>
<svg class="b" style="left:115.70px;top:549.20px" width="9" height="5" viewBox="0 0 9 5"><polygon points="0,0 8.4,0 4.2,4.1" fill="#000"/></svg>
<div class="b" style="left:358.80px;top:544.80px;width:13.20px;height:14.85px;background:#dad8d2;border-left:1px solid #ebebe8;border-top:1px solid #ebebe8;border-bottom:1.6px solid #404040;border-right:1px solid #8a8a8a;box-sizing:border-box"></div>
<svg class="b" style="left:361.10px;top:549.20px" width="9" height="5" viewBox="0 0 9 5"><polygon points="0,0 8.4,0 4.2,4.1" fill="#000"/></svg>
<div class="b" style="left:523.30px;top:544.80px;width:13.50px;height:14.85px;background:#dad8d2;border-left:1px solid #ebebe8;border-top:1px solid #ebebe8;border-bottom:1.6px solid #404040;border-right:1px solid #8a8a8a;box-sizing:border-box"></div>
<svg class="b" style="left:525.75px;top:549.20px" width="9" height="5" viewBox="0 0 9 5"><polygon points="0,0 8.4,0 4.2,4.1" fill="#000"/></svg>
<div class="b" style="left:774.00px;top:544.80px;width:13.60px;height:14.85px;background:#dad8d2;border-left:1px solid #ebebe8;border-top:1px solid #ebebe8;border-bottom:1.6px solid #404040;border-right:1px solid #8a8a8a;box-sizing:border-box"></div>
<svg class="b" style="left:776.50px;top:549.20px" width="9" height="5" viewBox="0 0 9 5"><polygon points="0,0 8.4,0 4.2,4.1" fill="#000"/></svg>
<div class="b" style="left:959.60px;top:544.80px;width:13.00px;height:14.85px;background:#dad8d2;border-left:1px solid #ebebe8;border-top:1px solid #ebebe8;border-bottom:1.6px solid #404040;border-right:1px solid #8a8a8a;box-sizing:border-box"></div>
<svg class="b" style="left:961.80px;top:549.20px" width="9" height="5" viewBox="0 0 9 5"><polygon points="0,0 8.4,0 4.2,4.1" fill="#000"/></svg>
<div class="b" style="left:1141.60px;top:544.80px;width:13.00px;height:14.85px;background:#dad8d2;border-left:1px solid #ebebe8;border-top:1px solid #ebebe8;border-bottom:1.6px solid #404040;border-right:1px solid #8a8a8a;box-sizing:border-box"></div>
<svg class="b" style="left:1143.80px;top:549.20px" width="9" height="5" viewBox="0 0 9 5"><polygon points="0,0 8.4,0 4.2,4.1" fill="#000"/></svg>
<div class="b" style="left:1453.50px;top:544.80px;width:13.10px;height:14.85px;background:#dad8d2;border-left:1px solid #ebebe8;border-top:1px solid #ebebe8;border-bottom:1.6px solid #404040;border-right:1px solid #8a8a8a;box-sizing:border-box"></div>
<svg class="b" style="left:1455.75px;top:549.20px" width="9" height="5" viewBox="0 0 9 5"><polygon points="0,0 8.4,0 4.2,4.1" fill="#000"/></svg>
<div class="b" style="left:1566.00px;top:544.80px;width:12.00px;height:14.85px;background:#dad8d2;border-left:1px solid #ebebe8;border-top:1px solid #ebebe8;border-bottom:1.6px solid #404040;border-right:1px solid #8a8a8a;box-sizing:border-box"></div>
<svg class="b" style="left:1567.70px;top:549.20px" width="9" height="5" viewBox="0 0 9 5"><polygon points="0,0 8.4,0 4.2,4.1" fill="#000"/></svg>
<div class="b" style="left:113.20px;top:560.65px;width:13.60px;height:14.85px;background:#dad8d2;border-left:1px solid #ebebe8;border-top:1px solid #ebebe8;border-bottom:1.6px solid #404040;border-right:1px solid #8a8a8a;box-sizing:border-box"></div>
<svg class="b" style="left:115.70px;top:565.05px" width="9" height="5" viewBox="0 0 9 5"><polygon points="0,0 8.4,0 4.2,4.1" fill="#000"/></svg>
<div class="b" style="left:358.80px;top:560.65px;width:13.20px;height:14.85px;background:#dad8d2;border-left:1px solid #ebebe8;border-top:1px solid #ebebe8;border-bottom:1.6px solid #404040;border-right:1px solid #8a8a8a;box-sizing:border-box"></div>
<svg class="b" style="left:361.10px;top:565.05px" width="9" height="5" viewBox="0 0 9 5"><polygon points="0,0 8.4,0 4.2,4.1" fill="#000"/></svg>
<div class="b" style="left:523.30px;top:560.65px;width:13.50px;height:14.85px;background:#dad8d2;border-left:1px solid #ebebe8;border-top:1px solid #ebebe8;border-bottom:1.6px solid #404040;border-right:1px solid #8a8a8a;box-sizing:border-box"></div>
<svg class="b" style="left:525.75px;top:565.05px" width="9" height="5" viewBox="0 0 9 5"><polygon points="0,0 8.4,0 4.2,4.1" fill="#000"/></svg>
<div class="b" style="left:774.00px;top:560.65px;width:13.60px;height:14.85px;background:#dad8d2;border-left:1px solid #ebebe8;border-top:1px solid #ebebe8;border-bottom:1.6px solid #404040;border-right:1px solid #8a8a8a;box-sizing:border-box"></div>
<svg class="b" style="left:776.50px;top:565.05px" width="9" height="5" viewBox="0 0 9 5"><polygon points="0,0 8.4,0 4.2,4.1" fill="#000"/></svg>
<div class="b" style="left:959.60px;top:560.65px;width:13.00px;height:14.85px;background:#dad8d2;border-left:1px solid #ebebe8;border-top:1px solid #ebebe8;border-bottom:1.6px solid #404040;border-right:1px solid #8a8a8a;box-sizing:border-box"></div>
<svg class="b" style="left:961.80px;top:565.05px" width="9" height="5" viewBox="0 0 9 5"><polygon points="0,0 8.4,0 4.2,4.1" fill="#000"/></svg>
<div class="b" style="left:1141.60px;top:560.65px;width:13.00px;height:14.85px;background:#dad8d2;border-left:1px solid #ebebe8;border-top:1px solid #ebebe8;border-bottom:1.6px solid #404040;border-right:1px solid #8a8a8a;box-sizing:border-box"></div>
<svg class="b" style="left:1143.80px;top:565.05px" width="9" height="5" viewBox="0 0 9 5"><polygon points="0,0 8.4,0 4.2,4.1" fill="#000"/></svg>
<div class="b" style="left:1453.50px;top:560.65px;width:13.10px;height:14.85px;background:#dad8d2;border-left:1px solid #ebebe8;border-top:1px solid #ebebe8;border-bottom:1.6px solid #404040;border-right:1px solid #8a8a8a;box-sizing:border-box"></div>
<svg class="b" style="left:1455.75px;top:565.05px" width="9" height="5" viewBox="0 0 9 5"><polygon points="0,0 8.4,0 4.2,4.1" fill="#000"/></svg>
<div class="b" style="left:1566.00px;top:560.65px;width:12.00px;height:14.85px;background:#dad8d2;border-left:1px solid #ebebe8;border-top:1px solid #ebebe8;border-bottom:1.6px solid #404040;border-right:1px solid #8a8a8a;box-sizing:border-box"></div>
<svg class="b" style="left:1567.70px;top:565.05px" width="9" height="5" viewBox="0 0 9 5"><polygon points="0,0 8.4,0 4.2,4.1" fill="#000"/></svg>
<div class="b" style="left:113.20px;top:576.50px;width:13.60px;height:14.85px;background:#dad8d2;border-left:1px solid #ebebe8;border-top:1px solid #ebebe8;border-bottom:1.6px solid #404040;border-right:1px solid #8a8a8a;box-sizing:border-box"></div>
<svg class="b" style="left:115.70px;top:580.90px" width="9" height="5" viewBox="0 0 9 5"><polygon points="0,0 8.4,0 4.2,4.1" fill="#000"/></svg>
<div class="b" style="left:358.80px;top:576.50px;width:13.20px;height:14.85px;background:#dad8d2;border-left:1px solid #ebebe8;border-top:1px solid #ebebe8;border-bottom:1.6px solid #404040;border-right:1px solid #8a8a8a;box-sizing:border-box"></div>
<svg class="b" style="left:361.10px;top:580.90px" width="9" height="5" viewBox="0 0 9 5"><polygon points="0,0 8.4,0 4.2,4.1" fill="#000"/></svg>
<div class="b" style="left:523.30px;top:576.50px;width:13.50px;height:14.85px;background:#dad8d2;border-left:1px solid #ebebe8;border-top:1px solid #ebebe8;border-bottom:1.6px solid #404040;border-right:1px solid #8a8a8a;box-sizing:border-box"></div>
<svg class="b" style="left:525.75px;top:580.90px" width="9" height="5" viewBox="0 0 9 5"><polygon points="0,0 8.4,0 4.2,4.1" fill="#000"/></svg>
<div class="b" style="left:774.00px;top:576.50px;width:13.60px;height:14.85px;background:#dad8d2;border-left:1px solid #ebebe8;border-top:1px solid #ebebe8;border-bottom:1.6px solid #404040;border-right:1px solid #8a8a8a;box-sizing:border-box"></div>
<svg class="b" style="left:776.50px;top:580.90px" width="9" height="5" viewBox="0 0 9 5"><polygon points="0,0 8.4,0 4.2,4.1" fill="#000"/></svg>
<div class="b" style="left:959.60px;top:576.50px;width:13.00px;height:14.85px;background:#dad8d2;border-left:1px solid #ebebe8;border-top:1px solid #ebebe8;border-bottom:1.6px solid #404040;border-right:1px solid #8a8a8a;box-sizing:border-box"></div>
<svg class="b" style="left:961.80px;top:580.90px" width="9" height="5" viewBox="0 0 9 5"><polygon points="0,0 8.4,0 4.2,4.1" fill="#000"/></svg>
<div class="b" style="left:1141.60px;top:576.50px;width:13.00px;height:14.85px;background:#dad8d2;border-left:1px solid #ebebe8;border-top:1px solid #ebebe8;border-bottom:1.6px solid #404040;border-right:1px solid #8a8a8a;box-sizing:border-box"></div>
<svg class="b" style="left:1143.80px;top:580.90px" width="9" height="5" viewBox="0 0 9 5"><polygon points="0,0 8.4,0 4.2,4.1" fill="#000"/></svg>
<div class="b" style="left:1453.50px;top:576.50px;width:13.10px;height:14.85px;background:#dad8d2;border-left:1px solid #ebebe8;border-top:1px solid #ebebe8;border-bottom:1.6px solid #404040;border-right:1px solid #8a8a8a;box-sizing:border-box"></div>
<svg class="b" style="left:1455.75px;top:580.90px" width="9" height="5" viewBox="0 0 9 5"><polygon points="0,0 8.4,0 4.2,4.1" fill="#000"/></svg>
<div class="b" style="left:1566.00px;top:576.50px;width:12.00px;height:14.85px;background:#dad8d2;border-left:1px solid #ebebe8;border-top:1px solid #ebebe8;border-bottom:1.6px solid #404040;border-right:1px solid #8a8a8a;box-sizing:border-box"></div>
<svg class="b" style="left:1567.70px;top:580.90px" width="9" height="5" viewBox="0 0 9 5"><polygon points="0,0 8.4,0 4.2,4.1" fill="#000"/></svg>
<div class="b" style="left:113.20px;top:592.35px;width:13.60px;height:14.85px;background:#dad8d2;border-left:1px solid #ebebe8;border-top:1px solid #ebebe8;border-bottom:1.6px solid #404040;border-right:1px solid #8a8a8a;box-sizing:border-box"></div>
<svg class="b" style="left:115.70px;top:596.75px" width="9" height="5" viewBox="0 0 9 5"><polygon points="0,0 8.4,0 4.2,4.1" fill="#000"/></svg>
<div class="b" style="left:358.80px;top:592.35px;width:13.20px;height:14.85px;background:#dad8d2;border-left:1px solid #ebebe8;border-top:1px solid #ebebe8;border-bottom:1.6px solid #404040;border-right:1px solid #8a8a8a;box-sizing:border-box"></div>
<svg class="b" style="left:361.10px;top:596.75px" width="9" height="5" viewBox="0 0 9 5"><polygon points="0,0 8.4,0 4.2,4.1" fill="#000"/></svg>
<div class="b" style="left:523.30px;top:592.35px;width:13.50px;height:14.85px;background:#dad8d2;border-left:1px solid #ebebe8;border-top:1px solid #ebebe8;border-bottom:1.6px solid #404040;border-right:1px solid #8a8a8a;box-sizing:border-box"></div>
<svg class="b" style="left:525.75px;top:596.75px" width="9" height="5" viewBox="0 0 9 5"><polygon points="0,0 8.4,0 4.2,4.1" fill="#000"/></svg>
<div class="b" style="left:774.00px;top:592.35px;width:13.60px;height:14.85px;background:#dad8d2;border-left:1px solid #ebebe8;border-top:1px solid #ebebe8;border-bottom:1.6px solid #404040;border-right:1px solid #8a8a8a;box-sizing:border-box"></div>
<svg class="b" style="left:776.50px;top:596.75px" width="9" height="5" viewBox="0 0 9 5"><polygon points="0,0 8.4,0 4.2,4.1" fill="#000"/></svg>
<div class="b" style="left:959.60px;top:592.35px;width:13.00px;height:14.85px;background:#dad8d2;border-left:1px solid #ebebe8;border-top:1px solid #ebebe8;border-bottom:1.6px solid #404040;border-right:1px solid #8a8a8a;box-sizing:border-box"></div>
<svg class="b" style="left:961.80px;top:596.75px" width="9" height="5" viewBox="0 0 9 5"><polygon points="0,0 8.4,0 4.2,4.1" fill="#000"/></svg>
<div class="b" style="left:1141.60px;top:592.35px;width:13.00px;height:14.85px;background:#dad8d2;border-left:1px solid #ebebe8;border-top:1px solid #ebebe8;border-bottom:1.6px solid #404040;border-right:1px solid #8a8a8a;box-sizing:border-box"></div>
<svg class="b" style="left:1143.80px;top:596.75px" width="9" height="5" viewBox="0 0 9 5"><polygon points="0,0 8.4,0 4.2,4.1" fill="#000"/></svg>
<div class="b" style="left:1453.50px;top:592.35px;width:13.10px;height:14.85px;background:#dad8d2;border-left:1px solid #ebebe8;border-top:1px solid #ebebe8;border-bottom:1.6px solid #404040;border-right:1px solid #8a8a8a;box-sizing:border-box"></div>
<svg class="b" style="left:1455.75px;top:596.75px" width="9" height="5" viewBox="0 0 9 5"><polygon points="0,0 8.4,0 4.2,4.1" fill="#000"/></svg>
<div class="b" style="left:1566.00px;top:592.35px;width:12.00px;height:14.85px;background:#dad8d2;border-left:1px solid #ebebe8;border-top:1px solid #ebebe8;border-bottom:1.6px solid #404040;border-right:1px solid #8a8a8a;box-sizing:border-box"></div>
<svg class="b" style="left:1567.70px;top:596.75px" width="9" height="5" viewBox="0 0 9 5"><polygon points="0,0 8.4,0 4.2,4.1" fill="#000"/></svg>
<div class="b" style="left:113.20px;top:608.20px;width:13.60px;height:14.85px;background:#dad8d2;border-left:1px solid #ebebe8;border-top:1px solid #ebebe8;border-bottom:1.6px solid #404040;border-right:1px solid #8a8a8a;box-sizing:border-box"></div>
<svg class="b" style="left:115.70px;top:612.60px" width="9" height="5" viewBox="0 0 9 5"><polygon points="0,0 8.4,0 4.2,4.1" fill="#000"/></svg>
<div class="b" style="left:358.80px;top:608.20px;width:13.20px;height:14.85px;background:#dad8d2;border-left:1px solid #ebebe8;border-top:1px solid #ebebe8;border-bottom:1.6px solid #404040;border-right:1px solid #8a8a8a;box-sizing:border-box"></div>
<svg class="b" style="left:361.10px;top:612.60px" width="9" height="5" viewBox="0 0 9 5"><polygon points="0,0 8.4,0 4.2,4.1" fill="#000"/></svg>
<div class="b" style="left:523.30px;top:608.20px;width:13.50px;height:14.85px;background:#dad8d2;border-left:1px solid #ebebe8;border-top:1px solid #ebebe8;border-bottom:1.6px solid #404040;border-right:1px solid #8a8a8a;box-sizing:border-box"></div>
<svg class="b" style="left:525.75px;top:612.60px" width="9" height="5" viewBox="0 0 9 5"><polygon points="0,0 8.4,0 4.2,4.1" fill="#000"/></svg>
<div class="b" style="left:774.00px;top:608.20px;width:13.60px;height:14.85px;background:#dad8d2;border-left:1px solid #ebebe8;border-top:1px solid #ebebe8;border-bottom:1.6px solid #404040;border-right:1px solid #8a8a8a;box-sizing:border-box"></div>
<svg class="b" style="left:776.50px;top:612.60px" width="9" height="5" viewBox="0 0 9 5"><polygon points="0,0 8.4,0 4.2,4.1" fill="#000"/></svg>
<div class="b" style="left:959.60px;top:608.20px;width:13.00px;height:14.85px;background:#dad8d2;border-left:1px solid #ebebe8;border-top:1px solid #ebebe8;border-bottom:1.6px solid #404040;border-right:1px solid #8a8a8a;box-sizing:border-box"></div>
<svg class="b" style="left:961.80px;top:612.60px" width="9" height="5" viewBox="0 0 9 5"><polygon points="0,0 8.4,0 4.2,4.1" fill="#000"/></svg>
<div class="b" style="left:1141.60px;top:608.20px;width:13.00px;height:14.85px;background:#dad8d2;border-left:1px solid #ebebe8;border-top:1px solid #ebebe8;border-bottom:1.6px solid #404040;border-right:1px solid #8a8a8a;box-sizing:border-box"></div>
<svg class="b" style="left:1143.80px;top:612.60px" width="9" height="5" viewBox="0 0 9 5"><polygon points="0,0 8.4,0 4.2,4.1" fill="#000"/></svg>
<div class="b" style="left:1453.50px;top:608.20px;width:13.10px;height:14.85px;background:#dad8d2;border-left:1px solid #ebebe8;border-top:1px solid #ebebe8;border-bottom:1.6px solid #404040;border-right:1px solid #8a8a8a;box-sizing:border-box"></div>
<svg class="b" style="left:1455.75px;top:612.60px" width="9" height="5" viewBox="0 0 9 5"><polygon points="0,0 8.4,0 4.2,4.1" fill="#000"/></svg>
<div class="b" style="left:1566.00px;top:608.20px;width:12.00px;height:14.85px;background:#dad8d2;border-left:1px solid #ebebe8;border-top:1px solid #ebebe8;border-bottom:1.6px solid #404040;border-right:1px solid #8a8a8a;box-sizing:border-box"></div>
<svg class="b" style="left:1567.70px;top:612.60px" width="9" height="5" viewBox="0 0 9 5"><polygon points="0,0 8.4,0 4.2,4.1" fill="#000"/></svg>
<div class="b" style="left:113.20px;top:624.05px;width:13.60px;height:14.85px;background:#dad8d2;border-left:1px solid #ebebe8;border-top:1px solid #ebebe8;border-bottom:1.6px solid #404040;border-right:1px solid #8a8a8a;box-sizing:border-box"></div>
<svg class="b" style="left:115.70px;top:628.45px" width="9" height="5" viewBox="0 0 9 5"><polygon points="0,0 8.4,0 4.2,4.1" fill="#000"/></svg>
<div class="b" style="left:358.80px;top:624.05px;width:13.20px;height:14.85px;background:#dad8d2;border-left:1px solid #ebebe8;border-top:1px solid #ebebe8;border-bottom:1.6px solid #404040;border-right:1px solid #8a8a8a;box-sizing:border-box"></div>
<svg class="b" style="left:361.10px;top:628.45px" width="9" height="5" viewBox="0 0 9 5"><polygon points="0,0 8.4,0 4.2,4.1" fill="#000"/></svg>
<div class="b" style="left:523.30px;top:624.05px;width:13.50px;height:14.85px;background:#dad8d2;border-left:1px solid #ebebe8;border-top:1px solid #ebebe8;border-bottom:1.6px solid #404040;border-right:1px solid #8a8a8a;box-sizing:border-box"></div>
<svg class="b" style="left:525.75px;top:628.45px" width="9" height="5" viewBox="0 0 9 5"><polygon points="0,0 8.4,0 4.2,4.1" fill="#000"/></svg>
<div class="b" style="left:774.00px;top:624.05px;width:13.60px;height:14.85px;background:#dad8d2;border-left:1px solid #ebebe8;border-top:1px solid #ebebe8;border-bottom:1.6px solid #404040;border-right:1px solid #8a8a8a;box-sizing:border-box"></div>
<svg class="b" style="left:776.50px;top:628.45px" width="9" height="5" viewBox="0 0 9 5"><polygon points="0,0 8.4,0 4.2,4.1" fill="#000"/></svg>
<div class="b" style="left:959.60px;top:624.05px;width:13.00px;height:14.85px;background:#dad8d2;border-left:1px solid #ebebe8;border-top:1px solid #ebebe8;border-bottom:1.6px solid #404040;border-right:1px solid #8a8a8a;box-sizing:border-box"></div>
<svg class="b" style="left:961.80px;top:628.45px" width="9" height="5" viewBox="0 0 9 5"><polygon points="0,0 8.4,0 4.2,4.1" fill="#000"/></svg>
<div class="b" style="left:1141.60px;top:624.05px;width:13.00px;height:14.85px;background:#dad8d2;border-left:1px solid #ebebe8;border-top:1px solid #ebebe8;border-bottom:1.6px solid #404040;border-right:1px solid #8a8a8a;box-sizing:border-box"></div>
<svg class="b" style="left:1143.80px;top:628.45px" width="9" height="5" viewBox="0 0 9 5"><polygon points="0,0 8.4,0 4.2,4.1" fill="#000"/></svg>
<div class="b" style="left:1453.50px;top:624.05px;width:13.10px;height:14.85px;background:#dad8d2;border-left:1px solid #ebebe8;border-top:1px solid #ebebe8;border-bottom:1.6px solid #404040;border-right:1px solid #8a8a8a;box-sizing:border-box"></div>
<svg class="b" style="left:1455.75px;top:628.45px" width="9" height="5" viewBox="0 0 9 5"><polygon points="0,0 8.4,0 4.2,4.1" fill="#000"/></svg>
<div class="b" style="left:1566.00px;top:624.05px;width:12.00px;height:14.85px;background:#dad8d2;border-left:1px solid #ebebe8;border-top:1px solid #ebebe8;border-bottom:1.6px solid #404040;border-right:1px solid #8a8a8a;box-sizing:border-box"></div>
<svg class="b" style="left:1567.70px;top:628.45px" width="9" height="5" viewBox="0 0 9 5"><polygon points="0,0 8.4,0 4.2,4.1" fill="#000"/></svg>
<div class="b" style="left:113.20px;top:639.90px;width:13.60px;height:14.85px;background:#dad8d2;border-left:1px solid #ebebe8;border-top:1px solid #ebebe8;border-bottom:1.6px solid #404040;border-right:1px solid #8a8a8a;box-sizing:border-box"></div>
<svg class="b" style="left:115.70px;top:644.30px" width="9" height="5" viewBox="0 0 9 5"><polygon points="0,0 8.4,0 4.2,4.1" fill="#000"/></svg>
<div class="b" style="left:358.80px;top:639.90px;width:13.20px;height:14.85px;background:#dad8d2;border-left:1px solid #ebebe8;border-top:1px solid #ebebe8;border-bottom:1.6px solid #404040;border-right:1px solid #8a8a8a;box-sizing:border-box"></div>
<svg class="b" style="left:361.10px;top:644.30px" width="9" height="5" viewBox="0 0 9 5"><polygon points="0,0 8.4,0 4.2,4.1" fill="#000"/></svg>
<div class="b" style="left:523.30px;top:639.90px;width:13.50px;height:14.85px;background:#dad8d2;border-left:1px solid #ebebe8;border-top:1px solid #ebebe8;border-bottom:1.6px solid #404040;border-right:1px solid #8a8a8a;box-sizing:border-box"></div>
<svg class="b" style="left:525.75px;top:644.30px" width="9" height="5" viewBox="0 0 9 5"><polygon points="0,0 8.4,0 4.2,4.1" fill="#000"/></svg>
<div class="b" style="left:774.00px;top:639.90px;width:13.60px;height:14.85px;background:#dad8d2;border-left:1px solid #ebebe8;border-top:1px solid #ebebe8;border-bottom:1.6px solid #404040;border-right:1px solid #8a8a8a;box-sizing:border-box"></div>
<svg class="b" style="left:776.50px;top:644.30px" width="9" height="5" viewBox="0 0 9 5"><polygon points="0,0 8.4,0 4.2,4.1" fill="#000"/></svg>
<div class="b" style="left:959.60px;top:639.90px;width:13.00px;height:14.85px;background:#dad8d2;border-left:1px solid #ebebe8;border-top:1px solid #ebebe8;border-bottom:1.6px solid #404040;border-right:1px solid #8a8a8a;box-sizing:border-box"></div>
<svg class="b" style="left:961.80px;top:644.30px" width="9" height="5" viewBox="0 0 9 5"><polygon points="0,0 8.4,0 4.2,4.1" fill="#000"/></svg>
<div class="b" style="left:1141.60px;top:639.90px;width:13.00px;height:14.85px;background:#dad8d2;border-left:1px solid #ebebe8;border-top:1px solid #ebebe8;border-bottom:1.6px solid #404040;border-right:1px solid #8a8a8a;box-sizing:border-box"></div>
<svg class="b" style="left:1143.80px;top:644.30px" width="9" height="5" viewBox="0 0 9 5"><polygon points="0,0 8.4,0 4.2,4.1" fill="#000"/></svg>
<div class="b" style="left:1453.50px;top:639.90px;width:13.10px;height:14.85px;background:#dad8d2;border-left:1px solid #ebebe8;border-top:1px solid #ebebe8;border-bottom:1.6px solid #404040;border-right:1px solid #8a8a8a;box-sizing:border-box"></div>
<svg class="b" style="left:1455.75px;top:644.30px" width="9" height="5" viewBox="0 0 9 5"><polygon points="0,0 8.4,0 4.2,4.1" fill="#000"/></svg>
<div class="b" style="left:1566.00px;top:639.90px;width:12.00px;height:14.85px;background:#dad8d2;border-left:1px solid #ebebe8;border-top:1px solid #ebebe8;border-bottom:1.6px solid #404040;border-right:1px solid #8a8a8a;box-sizing:border-box"></div>
<svg class="b" style="left:1567.70px;top:644.30px" width="9" height="5" viewBox="0 0 9 5"><polygon points="0,0 8.4,0 4.2,4.1" fill="#000"/></svg>
<div class="b" style="left:113.20px;top:655.75px;width:13.60px;height:14.85px;background:#dad8d2;border-left:1px solid #ebebe8;border-top:1px solid #ebebe8;border-bottom:1.6px solid #404040;border-right:1px solid #8a8a8a;box-sizing:border-box"></div>
<svg class="b" style="left:115.70px;top:660.15px" width="9" height="5" viewBox="0 0 9 5"><polygon points="0,0 8.4,0 4.2,4.1" fill="#000"/></svg>
<div class="b" style="left:358.80px;top:655.75px;width:13.20px;height:14.85px;background:#dad8d2;border-left:1px solid #ebebe8;border-top:1px solid #ebebe8;border-bottom:1.6px solid #404040;border-right:1px solid #8a8a8a;box-sizing:border-box"></div>
<svg class="b" style="left:361.10px;top:660.15px" width="9" height="5" viewBox="0 0 9 5"><polygon points="0,0 8.4,0 4.2,4.1" fill="#000"/></svg>
<div class="b" style="left:523.30px;top:655.75px;width:13.50px;height:14.85px;background:#dad8d2;border-left:1px solid #ebebe8;border-top:1px solid #ebebe8;border-bottom:1.6px solid #404040;border-right:1px solid #8a8a8a;box-sizing:border-box"></div>
<svg class="b" style="left:525.75px;top:660.15px" width="9" height="5" viewBox="0 0 9 5"><polygon points="0,0 8.4,0 4.2,4.1" fill="#000"/></svg>
<div class="b" style="left:774.00px;top:655.75px;width:13.60px;height:14.85px;background:#dad8d2;border-left:1px solid #ebebe8;border-top:1px solid #ebebe8;border-bottom:1.6px solid #404040;border-right:1px solid #8a8a8a;box-sizing:border-box"></div>
<svg class="b" style="left:776.50px;top:660.15px" width="9" height="5" viewBox="0 0 9 5"><polygon points="0,0 8.4,0 4.2,4.1" fill="#000"/></svg>
<div class="b" style="left:959.60px;top:655.75px;width:13.00px;height:14.85px;background:#dad8d2;border-left:1px solid #ebebe8;border-top:1px solid #ebebe8;border-bottom:1.6px solid #404040;border-right:1px solid #8a8a8a;box-sizing:border-box"></div>
<svg class="b" style="left:961.80px;top:660.15px" width="9" height="5" viewBox="0 0 9 5"><polygon points="0,0 8.4,0 4.2,4.1" fill="#000"/></svg>
<div class="b" style="left:1141.60px;top:655.75px;width:13.00px;height:14.85px;background:#dad8d2;border-left:1px solid #ebebe8;border-top:1px solid #ebebe8;border-bottom:1.6px solid #404040;border-right:1px solid #8a8a8a;box-sizing:border-box"></div>
<svg class="b" style="left:1143.80px;top:660.15px" width="9" height="5" viewBox="0 0 9 5"><polygon points="0,0 8.4,0 4.2,4.1" fill="#000"/></svg>
<div class="b" style="left:1453.50px;top:655.75px;width:13.10px;height:14.85px;background:#dad8d2;border-left:1px solid #ebebe8;border-top:1px solid #ebebe8;border-bottom:1.6px solid #404040;border-right:1px solid #8a8a8a;box-sizing:border-box"></div>
<svg class="b" style="left:1455.75px;top:660.15px" width="9" height="5" viewBox="0 0 9 5"><polygon points="0,0 8.4,0 4.2,4.1" fill="#000"/></svg>
<div class="b" style="left:1566.00px;top:655.75px;width:12.00px;height:14.85px;background:#dad8d2;border-left:1px solid #ebebe8;border-top:1px solid #ebebe8;border-bottom:1.6px solid #404040;border-right:1px solid #8a8a8a;box-sizing:border-box"></div>
<svg class="b" style="left:1567.70px;top:660.15px" width="9" height="5" viewBox="0 0 9 5"><polygon points="0,0 8.4,0 4.2,4.1" fill="#000"/></svg>
<div class="b" style="left:113.20px;top:671.60px;width:13.60px;height:14.85px;background:#dad8d2;border-left:1px solid #ebebe8;border-top:1px solid #ebebe8;border-bottom:1.6px solid #404040;border-right:1px solid #8a8a8a;box-sizing:border-box"></div>
<svg class="b" style="left:115.70px;top:676.00px" width="9" height="5" viewBox="0 0 9 5"><polygon points="0,0 8.4,0 4.2,4.1" fill="#000"/></svg>
<div class="b" style="left:358.80px;top:671.60px;width:13.20px;height:14.85px;background:#dad8d2;border-left:1px solid #ebebe8;border-top:1px solid #ebebe8;border-bottom:1.6px solid #404040;border-right:1px solid #8a8a8a;box-sizing:border-box"></div>
<svg class="b" style="left:361.10px;top:676.00px" width="9" height="5" viewBox="0 0 9 5"><polygon points="0,0 8.4,0 4.2,4.1" fill="#000"/></svg>
<div class="b" style="left:523.30px;top:671.60px;width:13.50px;height:14.85px;background:#dad8d2;border-left:1px solid #ebebe8;border-top:1px solid #ebebe8;border-bottom:1.6px solid #404040;border-right:1px solid #8a8a8a;box-sizing:border-box"></div>
<svg class="b" style="left:525.75px;top:676.00px" width="9" height="5" viewBox="0 0 9 5"><polygon points="0,0 8.4,0 4.2,4.1" fill="#000"/></svg>
<div class="b" style="left:774.00px;top:671.60px;width:13.60px;height:14.85px;background:#dad8d2;border-left:1px solid #ebebe8;border-top:1px solid #ebebe8;border-bottom:1.6px solid #404040;border-right:1px solid #8a8a8a;box-sizing:border-box"></div>
<svg class="b" style="left:776.50px;top:676.00px" width="9" height="5" viewBox="0 0 9 5"><polygon points="0,0 8.4,0 4.2,4.1" fill="#000"/></svg>
<div class="b" style="left:959.60px;top:671.60px;width:13.00px;height:14.85px;background:#dad8d2;border-left:1px solid #ebebe8;border-top:1px solid #ebebe8;border-bottom:1.6px solid #404040;border-right:1px solid #8a8a8a;box-sizing:border-box"></div>
<svg class="b" style="left:961.80px;top:676.00px" width="9" height="5" viewBox="0 0 9 5"><polygon points="0,0 8.4,0 4.2,4.1" fill="#000"/></svg>
<div class="b" style="left:1141.60px;top:671.60px;width:13.00px;height:14.85px;background:#dad8d2;border-left:1px solid #ebebe8;border-top:1px solid #ebebe8;border-bottom:1.6px solid #404040;border-right:1px solid #8a8a8a;box-sizing:border-box"></div>
<svg class="b" style="left:1143.80px;top:676.00px" width="9" height="5" viewBox="0 0 9 5"><polygon points="0,0 8.4,0 4.2,4.1" fill="#000"/></svg>
<div class="b" style="left:1453.50px;top:671.60px;width:13.10px;height:14.85px;background:#dad8d2;border-left:1px solid #ebebe8;border-top:1px solid #ebebe8;border-bottom:1.6px solid #404040;border-right:1px solid #8a8a8a;box-sizing:border-box"></div>
<svg class="b" style="left:1455.75px;top:676.00px" width="9" height="5" viewBox="0 0 9 5"><polygon points="0,0 8.4,0 4.2,4.1" fill="#000"/></svg>
<div class="b" style="left:1566.00px;top:671.60px;width:12.00px;height:14.85px;background:#dad8d2;border-left:1px solid #ebebe8;border-top:1px solid #ebebe8;border-bottom:1.6px solid #404040;border-right:1px solid #8a8a8a;box-sizing:border-box"></div>
<svg class="b" style="left:1567.70px;top:676.00px" width="9" height="5" viewBox="0 0 9 5"><polygon points="0,0 8.4,0 4.2,4.1" fill="#000"/></svg>
<div class="b" style="left:113.20px;top:687.45px;width:13.60px;height:12.95px;background:#dad8d2;border-left:1px solid #ebebe8;border-top:1px solid #ebebe8;border-bottom:1.6px solid #404040;border-right:1px solid #8a8a8a;box-sizing:border-box"></div>
<svg class="b" style="left:115.70px;top:691.85px" width="9" height="5" viewBox="0 0 9 5"><polygon points="0,0 8.4,0 4.2,4.1" fill="#000"/></svg>
<div class="b" style="left:358.80px;top:687.45px;width:13.20px;height:12.95px;background:#dad8d2;border-left:1px solid #ebebe8;border-top:1px solid #ebebe8;border-bottom:1.6px solid #404040;border-right:1px solid #8a8a8a;box-sizing:border-box"></div>
<svg class="b" style="left:361.10px;top:691.85px" width="9" height="5" viewBox="0 0 9 5"><polygon points="0,0 8.4,0 4.2,4.1" fill="#000"/></svg>
<div class="b" style="left:523.30px;top:687.45px;width:13.50px;height:12.95px;background:#dad8d2;border-left:1px solid #ebebe8;border-top:1px solid #ebebe8;border-bottom:1.6px solid #404040;border-right:1px solid #8a8a8a;box-sizing:border-box"></div>
<svg class="b" style="left:525.75px;top:691.85px" width="9" height="5" viewBox="0 0 9 5"><polygon points="0,0 8.4,0 4.2,4.1" fill="#000"/></svg>
<div class="b" style="left:774.00px;top:687.45px;width:13.60px;height:12.95px;background:#dad8d2;border-left:1px solid #ebebe8;border-top:1px solid #ebebe8;border-bottom:1.6px solid #404040;border-right:1px solid #8a8a8a;box-sizing:border-box"></div>
<svg class="b" style="left:776.50px;top:691.85px" width="9" height="5" viewBox="0 0 9 5"><polygon points="0,0 8.4,0 4.2,4.1" fill="#000"/></svg>
<div class="b" style="left:959.60px;top:687.45px;width:13.00px;height:12.95px;background:#dad8d2;border-left:1px solid #ebebe8;border-top:1px solid #ebebe8;border-bottom:1.6px solid #404040;border-right:1px solid #8a8a8a;box-sizing:border-box"></div>
<svg class="b" style="left:961.80px;top:691.85px" width="9" height="5" viewBox="0 0 9 5"><polygon points="0,0 8.4,0 4.2,4.1" fill="#000"/></svg>
<div class="b" style="left:1141.60px;top:687.45px;width:13.00px;height:12.95px;background:#dad8d2;border-left:1px solid #ebebe8;border-top:1px solid #ebebe8;border-bottom:1.6px solid #404040;border-right:1px solid #8a8a8a;box-sizing:border-box"></div>
<svg class="b" style="left:1143.80px;top:691.85px" width="9" height="5" viewBox="0 0 9 5"><polygon points="0,0 8.4,0 4.2,4.1" fill="#000"/></svg>
<div class="b" style="left:1453.50px;top:687.45px;width:13.10px;height:12.95px;background:#dad8d2;border-left:1px solid #ebebe8;border-top:1px solid #ebebe8;border-bottom:1.6px solid #404040;border-right:1px solid #8a8a8a;box-sizing:border-box"></div>
<svg class="b" style="left:1455.75px;top:691.85px" width="9" height="5" viewBox="0 0 9 5"><polygon points="0,0 8.4,0 4.2,4.1" fill="#000"/></svg>
<div class="b" style="left:1566.00px;top:687.45px;width:12.00px;height:12.95px;background:#dad8d2;border-left:1px solid #ebebe8;border-top:1px solid #ebebe8;border-bottom:1.6px solid #404040;border-right:1px solid #8a8a8a;box-sizing:border-box"></div>
<svg class="b" style="left:1567.70px;top:691.85px" width="9" height="5" viewBox="0 0 9 5"><polygon points="0,0 8.4,0 4.2,4.1" fill="#000"/></svg>
<div class="b" style="left:1574.50px;top:370.10px;width:16.50px;height:330.30px;background:#f2f2f2"></div>
<div class="b" style="left:1574.50px;top:370.10px;width:15.50px;height:15.70px;background:#f0f0f0;border-left:1px solid #fff;border-top:1px solid #fff;border-right:1px solid #5e5e5e;border-bottom:1px solid #5e5e5e;box-shadow:inset -1px -1px 0 #a8a8a8;box-sizing:border-box"></div>
<svg class="b" style="left:1578.5px;top:374px" width="8" height="5"><polygon points="0,4.5 4,0.5 8,4.5" fill="#000"/></svg>
<div class="b" style="left:1574.50px;top:386.80px;width:15.50px;height:16.00px;background:#f0f0f0;border-left:1px solid #fff;border-top:1px solid #fff;border-right:1px solid #5e5e5e;border-bottom:1px solid #5e5e5e;box-shadow:inset -1px -1px 0 #a8a8a8;box-sizing:border-box"></div>
<div class="b" style="left:1574.50px;top:683.50px;width:15.50px;height:16.50px;background:#f0f0f0;border-left:1px solid #fff;border-top:1px solid #fff;border-right:1px solid #5e5e5e;border-bottom:1px solid #5e5e5e;box-shadow:inset -1px -1px 0 #a8a8a8;box-sizing:border-box"></div>
<svg class="b" style="left:1578.5px;top:689px" width="8" height="5"><polygon points="0,0.5 8,0.5 4,4.5" fill="#000"/></svg>
<div class="b" style="left:16.30px;top:699.80px;width:1574.70px;height:17.00px;background:#f3f3f3"></div>
<div class="b" style="left:16.30px;top:700.60px;width:15.90px;height:16.00px;background:#f0f0f0;border-left:1px solid #fff;border-top:1px solid #fff;border-right:1px solid #5e5e5e;border-bottom:1px solid #5e5e5e;box-shadow:inset -1px -1px 0 #a8a8a8;box-sizing:border-box"></div>
<svg class="b" style="left:21px;top:705px" width="5" height="8"><polygon points="4.5,0 4.5,7.5 0.5,3.75" fill="#000"/></svg>
<div class="b" style="left:32.20px;top:700.60px;width:17.10px;height:16.00px;background:#f0f0f0;border-left:1px solid #fff;border-top:1px solid #fff;border-right:1px solid #5e5e5e;border-bottom:1px solid #5e5e5e;box-shadow:inset -1px -1px 0 #a8a8a8;box-sizing:border-box"></div>
<div class="b" style="left:1557.00px;top:700.60px;width:16.60px;height:16.00px;background:#f0f0f0;border-left:1px solid #fff;border-top:1px solid #fff;border-right:1px solid #5e5e5e;border-bottom:1px solid #5e5e5e;box-shadow:inset -1px -1px 0 #a8a8a8;box-sizing:border-box"></div>
<svg class="b" style="left:1563px;top:705px" width="5" height="8"><polygon points="0.5,0 0.5,7.5 4.5,3.75" fill="#000"/></svg>
<div class="b" style="left:1574.00px;top:700.40px;width:17.00px;height:16.40px;background:#f0f0f0"></div>
<div class="t" style="left:9.80px;top:730.84px;color:#0d1b2a;font-size:12px;line-height:14.0px;transform:scaleX(0.875);">Nepeněžní plnění:</div>
<div class="t" style="left:9.80px;top:746.84px;color:#0d1b2a;font-size:12px;line-height:14.0px;transform:scaleX(0.875);">Odměna:</div>
<div class="b" style="left:9.80px;top:762.50px;width:70.80px;height:18.30px;background:#fff;border-bottom:1.2px solid #6f7d8a;box-sizing:border-box"></div>
<div class="b" style="left:96.90px;top:731.00px;width:1491.60px;height:50.60px;background:#fff;border-bottom:1.5px solid #6f7d8a;box-sizing:border-box"></div>
<div class="b" style="left:1571.50px;top:732.00px;width:16.50px;height:47.50px;background:#f0f0f0"></div>
<svg class="b" style="left:1574px;top:737px" width="11" height="8"><polygon points="1,6.5 5.5,1.5 10,6.5" fill="#a3a3a3"/></svg>
<svg class="b" style="left:1574px;top:767px" width="11" height="8"><polygon points="1,1.5 5.5,6.5 10,1.5" fill="#a3a3a3"/></svg>
<div class="b" style="left:1334.00px;top:785.70px;width:80.90px;height:25.30px;background:#fefefe;border-top:1px solid #e4e6e8;border-left:1px solid #e4e6e8;border-right:1.8px solid #5a646e;border-bottom:1.8px solid #5a646e;box-sizing:border-box"></div>
<div class="t" style="left:1174.25px;width:400px;text-align:center;top:792.34px;color:#111;font-size:12px;line-height:14.0px;transform:scaleX(0.875);transform-origin:50% 0;">Použít</div>
<div class="b" style="left:1421.00px;top:785.70px;width:81.10px;height:25.30px;background:#fefefe;border-top:1px solid #e4e6e8;border-left:1px solid #e4e6e8;border-right:1.8px solid #5a646e;border-bottom:1.8px solid #5a646e;box-sizing:border-box"></div>
<div class="t" style="left:1261.35px;width:400px;text-align:center;top:792.34px;color:#111;font-size:12px;line-height:14.0px;transform:scaleX(0.875);transform-origin:50% 0;">Storno</div>
<div class="b" style="left:1508.70px;top:785.70px;width:80.30px;height:25.30px;background:#fefefe;border-top:1px solid #e4e6e8;border-left:1px solid #e4e6e8;border-right:1.8px solid #5a646e;border-bottom:1.8px solid #5a646e;box-sizing:border-box"></div>
<div class="t" style="left:1348.65px;width:400px;text-align:center;top:792.34px;color:#111;font-size:12px;line-height:14.0px;transform:scaleX(0.875);transform-origin:50% 0;">OK</div>
</body></html>
